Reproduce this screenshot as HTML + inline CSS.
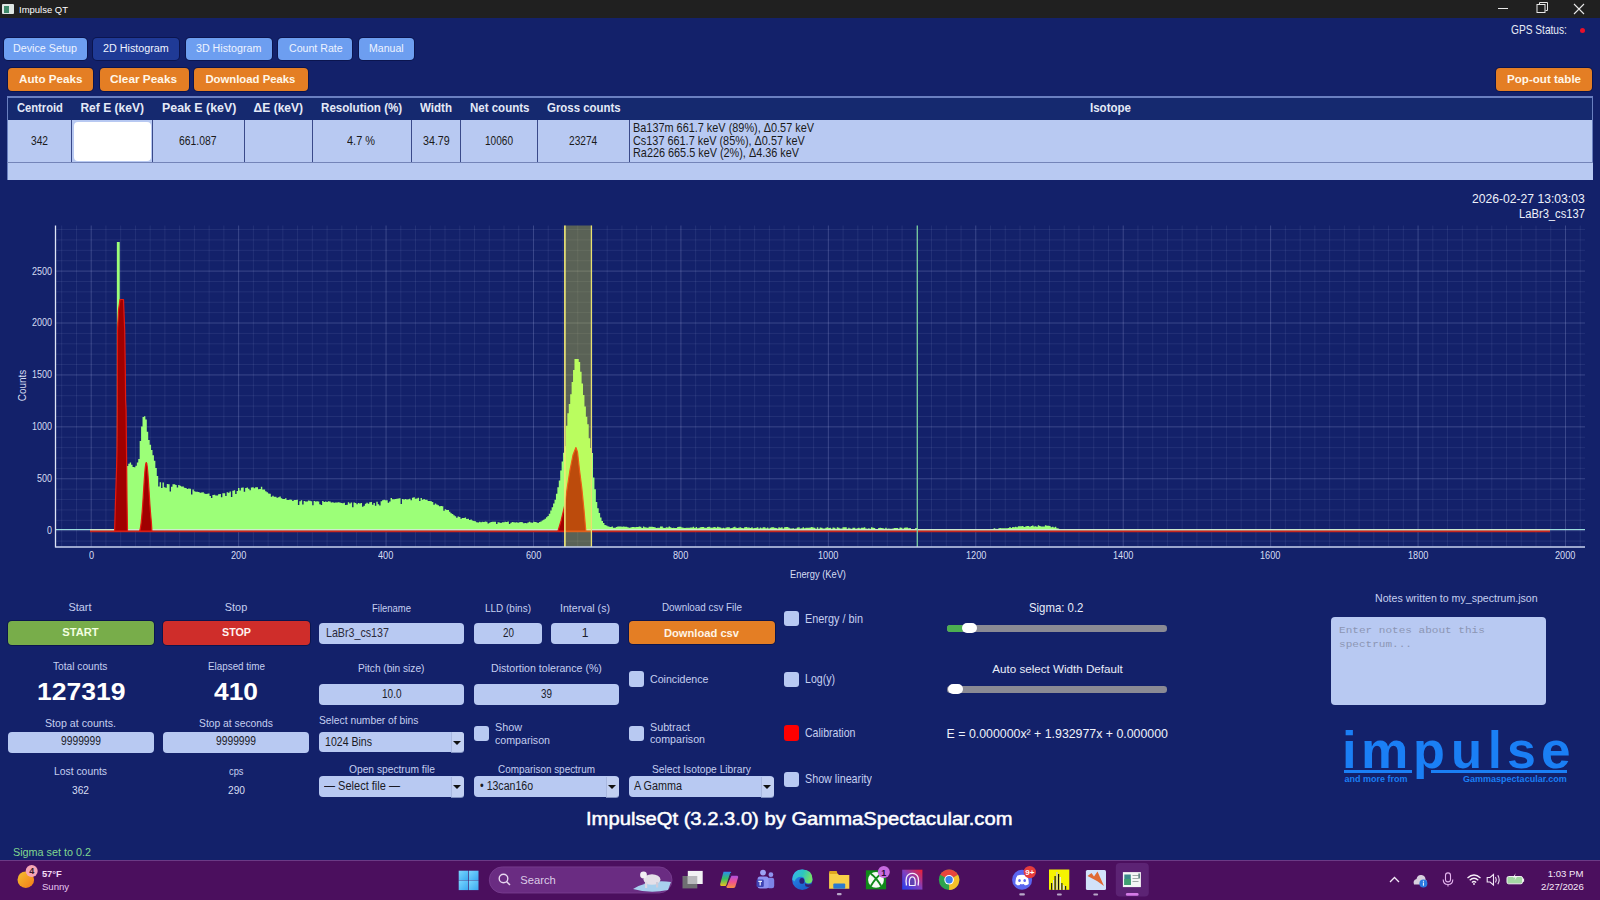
<!DOCTYPE html>
<html><head><meta charset="utf-8"><style>
html,body{margin:0;padding:0;width:1600px;height:900px;overflow:hidden;background:#13216a;}
.t{position:absolute;white-space:pre;}
.r{position:absolute;}
</style></head><body>
<div class="r" style="left:0.00px;top:0.00px;width:1600.00px;height:18.00px;background:#202020;border-radius:0px;"></div><div class="r" style="left:2.00px;top:4.00px;width:12.00px;height:10.00px;background:#dfe7e4;border-radius:1px;"></div><div class="r" style="left:4.00px;top:6.00px;width:5.00px;height:7.00px;background:#3f8a6a;border-radius:0px;"></div><div class="t" style="left:19.00px;top:4.93px;font-size:9.88px;line-height:9.88px;color:#ffffff;transform:scaleX(0.9593);transform-origin:0 0;font-family:'Liberation Sans', sans-serif;">Impulse QT</div><svg class="r" style="left:1490px;top:0px" width="110" height="18"><line x1="1498" y1="8.5" x2="1508" y2="8.5" transform="translate(-1490,0)" stroke="#e8e8e8" stroke-width="1"/><rect x="47" y="4.5" width="8" height="8" fill="none" stroke="#e8e8e8" stroke-width="1"/><path d="M49.5 4.5 V2.5 H57.5 V10.5 H55.5" fill="none" stroke="#e8e8e8" stroke-width="1"/><path d="M84 4 L94 14 M94 4 L84 14" stroke="#e8e8e8" stroke-width="1.1"/></svg><div class="r" style="left:0.00px;top:18.00px;width:1600.00px;height:842.00px;background:#13216a;border-radius:0px;"></div><div class="t" style="left:1511.00px;top:23.69px;font-size:12.06px;line-height:12.06px;color:#e6eaf5;transform:scaleX(0.8436);transform-origin:0 0;font-family:'Liberation Sans', sans-serif;">GPS Status:</div><div class="r" style="left:1579.5px;top:28.2px;width:5px;height:5px;border-radius:50%;background:#e8102a"></div><div class="r" style="left:4.00px;top:37.60px;width:83.00px;height:22.20px;background:#6d9ef0;border-radius:4px;box-shadow:0 0 0 1px rgba(6,12,56,0.55);"></div><div class="t" style="left:13.30px;top:42.45px;font-size:11.63px;line-height:11.63px;color:#eef3ff;transform:scaleX(0.9240);transform-origin:0 0;font-family:'Liberation Sans', sans-serif;">Device Setup</div><div class="r" style="left:93.00px;top:37.60px;width:86.00px;height:22.20px;background:#1f3a96;border-radius:4px;box-shadow:0 0 0 1px rgba(6,12,56,0.55);"></div><div class="t" style="left:103.40px;top:42.45px;font-size:11.63px;line-height:11.63px;color:#eef3ff;transform:scaleX(0.9258);transform-origin:0 0;font-family:'Liberation Sans', sans-serif;">2D Histogram</div><div class="r" style="left:186.00px;top:37.60px;width:86.00px;height:22.20px;background:#6d9ef0;border-radius:4px;box-shadow:0 0 0 1px rgba(6,12,56,0.55);"></div><div class="t" style="left:196.40px;top:42.45px;font-size:11.63px;line-height:11.63px;color:#eef3ff;transform:scaleX(0.9187);transform-origin:0 0;font-family:'Liberation Sans', sans-serif;">3D Histogram</div><div class="r" style="left:278.00px;top:37.60px;width:74.40px;height:22.20px;background:#6d9ef0;border-radius:4px;box-shadow:0 0 0 1px rgba(6,12,56,0.55);"></div><div class="t" style="left:288.70px;top:42.45px;font-size:11.63px;line-height:11.63px;color:#eef3ff;transform:scaleX(0.9130);transform-origin:0 0;font-family:'Liberation Sans', sans-serif;">Count Rate</div><div class="r" style="left:359.00px;top:37.60px;width:54.60px;height:22.20px;background:#6d9ef0;border-radius:4px;box-shadow:0 0 0 1px rgba(6,12,56,0.55);"></div><div class="t" style="left:369.40px;top:42.45px;font-size:11.63px;line-height:11.63px;color:#eef3ff;transform:scaleX(0.9073);transform-origin:0 0;font-family:'Liberation Sans', sans-serif;">Manual</div><div class="r" style="left:8.00px;top:67.80px;width:85.30px;height:23.40px;background:#e47e24;border-radius:4px;box-shadow:0 0 0 1px rgba(6,12,56,0.55);"></div><div class="t" style="left:18.70px;top:73.50px;font-size:11.34px;line-height:11.34px;color:#fff6e8;font-weight:bold;transform:scaleX(1.0285);transform-origin:0 0;font-family:'Liberation Sans', sans-serif;">Auto Peaks</div><div class="r" style="left:99.50px;top:67.80px;width:89.30px;height:23.40px;background:#e47e24;border-radius:4px;box-shadow:0 0 0 1px rgba(6,12,56,0.55);"></div><div class="t" style="left:110.20px;top:73.50px;font-size:11.34px;line-height:11.34px;color:#fff6e8;font-weight:bold;transform:scaleX(1.0437);transform-origin:0 0;font-family:'Liberation Sans', sans-serif;">Clear Peaks</div><div class="r" style="left:194.30px;top:67.80px;width:113.50px;height:23.40px;background:#e47e24;border-radius:4px;box-shadow:0 0 0 1px rgba(6,12,56,0.55);"></div><div class="t" style="left:205.40px;top:73.50px;font-size:11.34px;line-height:11.34px;color:#fff6e8;font-weight:bold;font-family:'Liberation Sans', sans-serif;">Download Peaks</div><div class="r" style="left:1496.00px;top:67.80px;width:96.00px;height:23.40px;background:#e47e24;border-radius:4px;box-shadow:0 0 0 1px rgba(6,12,56,0.55);"></div><div class="t" style="left:1506.70px;top:73.50px;font-size:11.34px;line-height:11.34px;color:#fff6e8;font-weight:bold;transform:scaleX(1.0232);transform-origin:0 0;font-family:'Liberation Sans', sans-serif;">Pop-out table</div><div class="r" style="left:7.00px;top:96.00px;width:1585.50px;height:84.00px;background:#b8c9f2;border-radius:0px;"></div><div class="r" style="left:7.00px;top:96.00px;width:1585.50px;height:24.00px;background:#15296f;border-radius:0px;"></div><div class="r" style="left:7.00px;top:96.00px;width:1585.50px;height:1.50px;background:#6a7fc0;border-radius:0px;"></div><div class="r" style="left:7.00px;top:96.00px;width:1.20px;height:84.00px;background:#6a7fc0;border-radius:0px;"></div><div class="r" style="left:1591.50px;top:96.00px;width:1.00px;height:66.00px;background:#6a7fc0;border-radius:0px;"></div><div class="r" style="left:7.00px;top:162.00px;width:1585.50px;height:1.20px;background:#7484b8;border-radius:0px;"></div><div class="r" style="left:70.60px;top:120.00px;width:1.20px;height:42.00px;background:#3a4a8a;border-radius:0px;"></div><div class="r" style="left:151.80px;top:120.00px;width:1.20px;height:42.00px;background:#3a4a8a;border-radius:0px;"></div><div class="r" style="left:243.80px;top:120.00px;width:1.20px;height:42.00px;background:#3a4a8a;border-radius:0px;"></div><div class="r" style="left:311.80px;top:120.00px;width:1.20px;height:42.00px;background:#3a4a8a;border-radius:0px;"></div><div class="r" style="left:410.60px;top:120.00px;width:1.20px;height:42.00px;background:#3a4a8a;border-radius:0px;"></div><div class="r" style="left:459.90px;top:120.00px;width:1.20px;height:42.00px;background:#3a4a8a;border-radius:0px;"></div><div class="r" style="left:536.90px;top:120.00px;width:1.20px;height:42.00px;background:#3a4a8a;border-radius:0px;"></div><div class="r" style="left:628.90px;top:120.00px;width:1.20px;height:42.00px;background:#3a4a8a;border-radius:0px;"></div><div class="r" style="left:73.60px;top:121.60px;width:77.40px;height:39.40px;background:#ffffff;border-radius:4px;"></div><div class="t" style="left:17.00px;top:102.39px;font-size:12.06px;line-height:12.06px;color:#e4e9f7;font-weight:bold;transform:scaleX(0.9276);transform-origin:0 0;font-family:'Liberation Sans', sans-serif;">Centroid</div><div class="t" style="left:80.40px;top:102.39px;font-size:12.06px;line-height:12.06px;color:#e4e9f7;font-weight:bold;font-family:'Liberation Sans', sans-serif;">Ref E (keV)</div><div class="t" style="left:162.00px;top:102.39px;font-size:12.06px;line-height:12.06px;color:#e4e9f7;font-weight:bold;transform:scaleX(1.0273);transform-origin:0 0;font-family:'Liberation Sans', sans-serif;">Peak E (keV)</div><div class="t" style="left:253.60px;top:102.39px;font-size:12.06px;line-height:12.06px;color:#e4e9f7;font-weight:bold;font-family:'Liberation Sans', sans-serif;">ΔE (keV)</div><div class="t" style="left:321.20px;top:102.39px;font-size:12.06px;line-height:12.06px;color:#e4e9f7;font-weight:bold;transform:scaleX(0.9628);transform-origin:0 0;font-family:'Liberation Sans', sans-serif;">Resolution (%)</div><div class="t" style="left:420.00px;top:102.39px;font-size:12.06px;line-height:12.06px;color:#e4e9f7;font-weight:bold;transform:scaleX(0.9585);transform-origin:0 0;font-family:'Liberation Sans', sans-serif;">Width</div><div class="t" style="left:469.50px;top:102.39px;font-size:12.06px;line-height:12.06px;color:#e4e9f7;font-weight:bold;transform:scaleX(0.9546);transform-origin:0 0;font-family:'Liberation Sans', sans-serif;">Net counts</div><div class="t" style="left:547.00px;top:102.39px;font-size:12.06px;line-height:12.06px;color:#e4e9f7;font-weight:bold;transform:scaleX(0.9484);transform-origin:0 0;font-family:'Liberation Sans', sans-serif;">Gross counts</div><div class="t" style="left:1090.00px;top:102.39px;font-size:12.06px;line-height:12.06px;color:#e4e9f7;font-weight:bold;transform:scaleX(0.9559);transform-origin:0 0;font-family:'Liberation Sans', sans-serif;">Isotope</div><div class="t" style="left:31.00px;top:134.54px;font-size:12.35px;line-height:12.35px;color:#1a1a1a;transform:scaleX(0.8248);transform-origin:0 0;font-family:'Liberation Sans', sans-serif;">342</div><div class="t" style="left:179.40px;top:134.54px;font-size:12.35px;line-height:12.35px;color:#1a1a1a;transform:scaleX(0.8420);transform-origin:0 0;font-family:'Liberation Sans', sans-serif;">661.087</div><div class="t" style="left:347.00px;top:134.54px;font-size:12.35px;line-height:12.35px;color:#1a1a1a;transform:scaleX(0.8864);transform-origin:0 0;font-family:'Liberation Sans', sans-serif;">4.7 %</div><div class="t" style="left:422.50px;top:134.54px;font-size:12.35px;line-height:12.35px;color:#1a1a1a;transform:scaleX(0.8653);transform-origin:0 0;font-family:'Liberation Sans', sans-serif;">34.79</div><div class="t" style="left:485.00px;top:134.54px;font-size:12.35px;line-height:12.35px;color:#1a1a1a;transform:scaleX(0.8151);transform-origin:0 0;font-family:'Liberation Sans', sans-serif;">10060</div><div class="t" style="left:569.25px;top:134.54px;font-size:12.35px;line-height:12.35px;color:#1a1a1a;transform:scaleX(0.8224);transform-origin:0 0;font-family:'Liberation Sans', sans-serif;">23274</div><div class="t" style="left:632.50px;top:122.29px;font-size:12.06px;line-height:12.06px;color:#1a1a1a;transform:scaleX(0.9039);transform-origin:0 0;font-family:'Liberation Sans', sans-serif;">Ba137m 661.7 keV (89%), Δ0.57 keV</div><div class="t" style="left:632.50px;top:134.79px;font-size:12.06px;line-height:12.06px;color:#1a1a1a;transform:scaleX(0.9031);transform-origin:0 0;font-family:'Liberation Sans', sans-serif;">Cs137 661.7 keV (85%), Δ0.57 keV</div><div class="t" style="left:632.50px;top:146.79px;font-size:12.06px;line-height:12.06px;color:#1a1a1a;transform:scaleX(0.9014);transform-origin:0 0;font-family:'Liberation Sans', sans-serif;">Ra226 665.5 keV (2%), Δ4.36 keV</div><div class="t" style="left:1472.00px;top:193.17px;font-size:12.79px;line-height:12.79px;color:#eef1fa;transform:scaleX(0.9498);transform-origin:0 0;font-family:'Liberation Sans', sans-serif;">2026-02-27 13:03:03</div><div class="t" style="left:1518.80px;top:207.76px;font-size:12.21px;line-height:12.21px;color:#eef1fa;transform:scaleX(0.9173);transform-origin:0 0;font-family:'Liberation Sans', sans-serif;">LaBr3_cs137</div><svg class="r" style="left:0;top:0" width="1600" height="600" viewBox="0 0 1600 600"><line x1="61.71" y1="225.5" x2="61.71" y2="547" stroke="rgba(200,210,255,0.09)" stroke-width="1"/><line x1="76.46" y1="225.5" x2="76.46" y2="547" stroke="rgba(200,210,255,0.09)" stroke-width="1"/><line x1="91.20" y1="225.5" x2="91.20" y2="547" stroke="rgba(200,210,255,0.22)" stroke-width="1"/><line x1="105.94" y1="225.5" x2="105.94" y2="547" stroke="rgba(200,210,255,0.09)" stroke-width="1"/><line x1="120.69" y1="225.5" x2="120.69" y2="547" stroke="rgba(200,210,255,0.09)" stroke-width="1"/><line x1="135.43" y1="225.5" x2="135.43" y2="547" stroke="rgba(200,210,255,0.09)" stroke-width="1"/><line x1="150.17" y1="225.5" x2="150.17" y2="547" stroke="rgba(200,210,255,0.09)" stroke-width="1"/><line x1="164.92" y1="225.5" x2="164.92" y2="547" stroke="rgba(200,210,255,0.09)" stroke-width="1"/><line x1="179.66" y1="225.5" x2="179.66" y2="547" stroke="rgba(200,210,255,0.09)" stroke-width="1"/><line x1="194.40" y1="225.5" x2="194.40" y2="547" stroke="rgba(200,210,255,0.09)" stroke-width="1"/><line x1="209.14" y1="225.5" x2="209.14" y2="547" stroke="rgba(200,210,255,0.09)" stroke-width="1"/><line x1="223.89" y1="225.5" x2="223.89" y2="547" stroke="rgba(200,210,255,0.09)" stroke-width="1"/><line x1="238.63" y1="225.5" x2="238.63" y2="547" stroke="rgba(200,210,255,0.22)" stroke-width="1"/><line x1="253.37" y1="225.5" x2="253.37" y2="547" stroke="rgba(200,210,255,0.09)" stroke-width="1"/><line x1="268.12" y1="225.5" x2="268.12" y2="547" stroke="rgba(200,210,255,0.09)" stroke-width="1"/><line x1="282.86" y1="225.5" x2="282.86" y2="547" stroke="rgba(200,210,255,0.09)" stroke-width="1"/><line x1="297.60" y1="225.5" x2="297.60" y2="547" stroke="rgba(200,210,255,0.09)" stroke-width="1"/><line x1="312.34" y1="225.5" x2="312.34" y2="547" stroke="rgba(200,210,255,0.09)" stroke-width="1"/><line x1="327.09" y1="225.5" x2="327.09" y2="547" stroke="rgba(200,210,255,0.09)" stroke-width="1"/><line x1="341.83" y1="225.5" x2="341.83" y2="547" stroke="rgba(200,210,255,0.09)" stroke-width="1"/><line x1="356.57" y1="225.5" x2="356.57" y2="547" stroke="rgba(200,210,255,0.09)" stroke-width="1"/><line x1="371.32" y1="225.5" x2="371.32" y2="547" stroke="rgba(200,210,255,0.09)" stroke-width="1"/><line x1="386.06" y1="225.5" x2="386.06" y2="547" stroke="rgba(200,210,255,0.22)" stroke-width="1"/><line x1="400.80" y1="225.5" x2="400.80" y2="547" stroke="rgba(200,210,255,0.09)" stroke-width="1"/><line x1="415.55" y1="225.5" x2="415.55" y2="547" stroke="rgba(200,210,255,0.09)" stroke-width="1"/><line x1="430.29" y1="225.5" x2="430.29" y2="547" stroke="rgba(200,210,255,0.09)" stroke-width="1"/><line x1="445.03" y1="225.5" x2="445.03" y2="547" stroke="rgba(200,210,255,0.09)" stroke-width="1"/><line x1="459.77" y1="225.5" x2="459.77" y2="547" stroke="rgba(200,210,255,0.09)" stroke-width="1"/><line x1="474.52" y1="225.5" x2="474.52" y2="547" stroke="rgba(200,210,255,0.09)" stroke-width="1"/><line x1="489.26" y1="225.5" x2="489.26" y2="547" stroke="rgba(200,210,255,0.09)" stroke-width="1"/><line x1="504.00" y1="225.5" x2="504.00" y2="547" stroke="rgba(200,210,255,0.09)" stroke-width="1"/><line x1="518.75" y1="225.5" x2="518.75" y2="547" stroke="rgba(200,210,255,0.09)" stroke-width="1"/><line x1="533.49" y1="225.5" x2="533.49" y2="547" stroke="rgba(200,210,255,0.22)" stroke-width="1"/><line x1="548.23" y1="225.5" x2="548.23" y2="547" stroke="rgba(200,210,255,0.09)" stroke-width="1"/><line x1="562.98" y1="225.5" x2="562.98" y2="547" stroke="rgba(200,210,255,0.09)" stroke-width="1"/><line x1="577.72" y1="225.5" x2="577.72" y2="547" stroke="rgba(200,210,255,0.09)" stroke-width="1"/><line x1="592.46" y1="225.5" x2="592.46" y2="547" stroke="rgba(200,210,255,0.09)" stroke-width="1"/><line x1="607.21" y1="225.5" x2="607.21" y2="547" stroke="rgba(200,210,255,0.09)" stroke-width="1"/><line x1="621.95" y1="225.5" x2="621.95" y2="547" stroke="rgba(200,210,255,0.09)" stroke-width="1"/><line x1="636.69" y1="225.5" x2="636.69" y2="547" stroke="rgba(200,210,255,0.09)" stroke-width="1"/><line x1="651.43" y1="225.5" x2="651.43" y2="547" stroke="rgba(200,210,255,0.09)" stroke-width="1"/><line x1="666.18" y1="225.5" x2="666.18" y2="547" stroke="rgba(200,210,255,0.09)" stroke-width="1"/><line x1="680.92" y1="225.5" x2="680.92" y2="547" stroke="rgba(200,210,255,0.22)" stroke-width="1"/><line x1="695.66" y1="225.5" x2="695.66" y2="547" stroke="rgba(200,210,255,0.09)" stroke-width="1"/><line x1="710.41" y1="225.5" x2="710.41" y2="547" stroke="rgba(200,210,255,0.09)" stroke-width="1"/><line x1="725.15" y1="225.5" x2="725.15" y2="547" stroke="rgba(200,210,255,0.09)" stroke-width="1"/><line x1="739.89" y1="225.5" x2="739.89" y2="547" stroke="rgba(200,210,255,0.09)" stroke-width="1"/><line x1="754.63" y1="225.5" x2="754.63" y2="547" stroke="rgba(200,210,255,0.09)" stroke-width="1"/><line x1="769.38" y1="225.5" x2="769.38" y2="547" stroke="rgba(200,210,255,0.09)" stroke-width="1"/><line x1="784.12" y1="225.5" x2="784.12" y2="547" stroke="rgba(200,210,255,0.09)" stroke-width="1"/><line x1="798.86" y1="225.5" x2="798.86" y2="547" stroke="rgba(200,210,255,0.09)" stroke-width="1"/><line x1="813.61" y1="225.5" x2="813.61" y2="547" stroke="rgba(200,210,255,0.09)" stroke-width="1"/><line x1="828.35" y1="225.5" x2="828.35" y2="547" stroke="rgba(200,210,255,0.22)" stroke-width="1"/><line x1="843.09" y1="225.5" x2="843.09" y2="547" stroke="rgba(200,210,255,0.09)" stroke-width="1"/><line x1="857.84" y1="225.5" x2="857.84" y2="547" stroke="rgba(200,210,255,0.09)" stroke-width="1"/><line x1="872.58" y1="225.5" x2="872.58" y2="547" stroke="rgba(200,210,255,0.09)" stroke-width="1"/><line x1="887.32" y1="225.5" x2="887.32" y2="547" stroke="rgba(200,210,255,0.09)" stroke-width="1"/><line x1="902.07" y1="225.5" x2="902.07" y2="547" stroke="rgba(200,210,255,0.09)" stroke-width="1"/><line x1="916.81" y1="225.5" x2="916.81" y2="547" stroke="rgba(200,210,255,0.09)" stroke-width="1"/><line x1="931.55" y1="225.5" x2="931.55" y2="547" stroke="rgba(200,210,255,0.09)" stroke-width="1"/><line x1="946.29" y1="225.5" x2="946.29" y2="547" stroke="rgba(200,210,255,0.09)" stroke-width="1"/><line x1="961.04" y1="225.5" x2="961.04" y2="547" stroke="rgba(200,210,255,0.09)" stroke-width="1"/><line x1="975.78" y1="225.5" x2="975.78" y2="547" stroke="rgba(200,210,255,0.22)" stroke-width="1"/><line x1="990.52" y1="225.5" x2="990.52" y2="547" stroke="rgba(200,210,255,0.09)" stroke-width="1"/><line x1="1005.27" y1="225.5" x2="1005.27" y2="547" stroke="rgba(200,210,255,0.09)" stroke-width="1"/><line x1="1020.01" y1="225.5" x2="1020.01" y2="547" stroke="rgba(200,210,255,0.09)" stroke-width="1"/><line x1="1034.75" y1="225.5" x2="1034.75" y2="547" stroke="rgba(200,210,255,0.09)" stroke-width="1"/><line x1="1049.49" y1="225.5" x2="1049.49" y2="547" stroke="rgba(200,210,255,0.09)" stroke-width="1"/><line x1="1064.24" y1="225.5" x2="1064.24" y2="547" stroke="rgba(200,210,255,0.09)" stroke-width="1"/><line x1="1078.98" y1="225.5" x2="1078.98" y2="547" stroke="rgba(200,210,255,0.09)" stroke-width="1"/><line x1="1093.72" y1="225.5" x2="1093.72" y2="547" stroke="rgba(200,210,255,0.09)" stroke-width="1"/><line x1="1108.47" y1="225.5" x2="1108.47" y2="547" stroke="rgba(200,210,255,0.09)" stroke-width="1"/><line x1="1123.21" y1="225.5" x2="1123.21" y2="547" stroke="rgba(200,210,255,0.22)" stroke-width="1"/><line x1="1137.95" y1="225.5" x2="1137.95" y2="547" stroke="rgba(200,210,255,0.09)" stroke-width="1"/><line x1="1152.70" y1="225.5" x2="1152.70" y2="547" stroke="rgba(200,210,255,0.09)" stroke-width="1"/><line x1="1167.44" y1="225.5" x2="1167.44" y2="547" stroke="rgba(200,210,255,0.09)" stroke-width="1"/><line x1="1182.18" y1="225.5" x2="1182.18" y2="547" stroke="rgba(200,210,255,0.09)" stroke-width="1"/><line x1="1196.92" y1="225.5" x2="1196.92" y2="547" stroke="rgba(200,210,255,0.09)" stroke-width="1"/><line x1="1211.67" y1="225.5" x2="1211.67" y2="547" stroke="rgba(200,210,255,0.09)" stroke-width="1"/><line x1="1226.41" y1="225.5" x2="1226.41" y2="547" stroke="rgba(200,210,255,0.09)" stroke-width="1"/><line x1="1241.15" y1="225.5" x2="1241.15" y2="547" stroke="rgba(200,210,255,0.09)" stroke-width="1"/><line x1="1255.90" y1="225.5" x2="1255.90" y2="547" stroke="rgba(200,210,255,0.09)" stroke-width="1"/><line x1="1270.64" y1="225.5" x2="1270.64" y2="547" stroke="rgba(200,210,255,0.22)" stroke-width="1"/><line x1="1285.38" y1="225.5" x2="1285.38" y2="547" stroke="rgba(200,210,255,0.09)" stroke-width="1"/><line x1="1300.13" y1="225.5" x2="1300.13" y2="547" stroke="rgba(200,210,255,0.09)" stroke-width="1"/><line x1="1314.87" y1="225.5" x2="1314.87" y2="547" stroke="rgba(200,210,255,0.09)" stroke-width="1"/><line x1="1329.61" y1="225.5" x2="1329.61" y2="547" stroke="rgba(200,210,255,0.09)" stroke-width="1"/><line x1="1344.36" y1="225.5" x2="1344.36" y2="547" stroke="rgba(200,210,255,0.09)" stroke-width="1"/><line x1="1359.10" y1="225.5" x2="1359.10" y2="547" stroke="rgba(200,210,255,0.09)" stroke-width="1"/><line x1="1373.84" y1="225.5" x2="1373.84" y2="547" stroke="rgba(200,210,255,0.09)" stroke-width="1"/><line x1="1388.58" y1="225.5" x2="1388.58" y2="547" stroke="rgba(200,210,255,0.09)" stroke-width="1"/><line x1="1403.33" y1="225.5" x2="1403.33" y2="547" stroke="rgba(200,210,255,0.09)" stroke-width="1"/><line x1="1418.07" y1="225.5" x2="1418.07" y2="547" stroke="rgba(200,210,255,0.22)" stroke-width="1"/><line x1="1432.81" y1="225.5" x2="1432.81" y2="547" stroke="rgba(200,210,255,0.09)" stroke-width="1"/><line x1="1447.56" y1="225.5" x2="1447.56" y2="547" stroke="rgba(200,210,255,0.09)" stroke-width="1"/><line x1="1462.30" y1="225.5" x2="1462.30" y2="547" stroke="rgba(200,210,255,0.09)" stroke-width="1"/><line x1="1477.04" y1="225.5" x2="1477.04" y2="547" stroke="rgba(200,210,255,0.09)" stroke-width="1"/><line x1="1491.79" y1="225.5" x2="1491.79" y2="547" stroke="rgba(200,210,255,0.09)" stroke-width="1"/><line x1="1506.53" y1="225.5" x2="1506.53" y2="547" stroke="rgba(200,210,255,0.09)" stroke-width="1"/><line x1="1521.27" y1="225.5" x2="1521.27" y2="547" stroke="rgba(200,210,255,0.09)" stroke-width="1"/><line x1="1536.01" y1="225.5" x2="1536.01" y2="547" stroke="rgba(200,210,255,0.09)" stroke-width="1"/><line x1="1550.76" y1="225.5" x2="1550.76" y2="547" stroke="rgba(200,210,255,0.09)" stroke-width="1"/><line x1="1565.50" y1="225.5" x2="1565.50" y2="547" stroke="rgba(200,210,255,0.22)" stroke-width="1"/><line x1="1580.24" y1="225.5" x2="1580.24" y2="547" stroke="rgba(200,210,255,0.09)" stroke-width="1"/><line x1="55.5" y1="541.08" x2="1585" y2="541.08" stroke="rgba(200,210,255,0.09)" stroke-width="1"/><line x1="55.5" y1="530.70" x2="1585" y2="530.70" stroke="rgba(200,210,255,0.22)" stroke-width="1"/><line x1="55.5" y1="520.32" x2="1585" y2="520.32" stroke="rgba(200,210,255,0.09)" stroke-width="1"/><line x1="55.5" y1="509.93" x2="1585" y2="509.93" stroke="rgba(200,210,255,0.09)" stroke-width="1"/><line x1="55.5" y1="499.55" x2="1585" y2="499.55" stroke="rgba(200,210,255,0.09)" stroke-width="1"/><line x1="55.5" y1="489.16" x2="1585" y2="489.16" stroke="rgba(200,210,255,0.09)" stroke-width="1"/><line x1="55.5" y1="478.78" x2="1585" y2="478.78" stroke="rgba(200,210,255,0.22)" stroke-width="1"/><line x1="55.5" y1="468.40" x2="1585" y2="468.40" stroke="rgba(200,210,255,0.09)" stroke-width="1"/><line x1="55.5" y1="458.01" x2="1585" y2="458.01" stroke="rgba(200,210,255,0.09)" stroke-width="1"/><line x1="55.5" y1="447.63" x2="1585" y2="447.63" stroke="rgba(200,210,255,0.09)" stroke-width="1"/><line x1="55.5" y1="437.24" x2="1585" y2="437.24" stroke="rgba(200,210,255,0.09)" stroke-width="1"/><line x1="55.5" y1="426.86" x2="1585" y2="426.86" stroke="rgba(200,210,255,0.22)" stroke-width="1"/><line x1="55.5" y1="416.48" x2="1585" y2="416.48" stroke="rgba(200,210,255,0.09)" stroke-width="1"/><line x1="55.5" y1="406.09" x2="1585" y2="406.09" stroke="rgba(200,210,255,0.09)" stroke-width="1"/><line x1="55.5" y1="395.71" x2="1585" y2="395.71" stroke="rgba(200,210,255,0.09)" stroke-width="1"/><line x1="55.5" y1="385.32" x2="1585" y2="385.32" stroke="rgba(200,210,255,0.09)" stroke-width="1"/><line x1="55.5" y1="374.94" x2="1585" y2="374.94" stroke="rgba(200,210,255,0.22)" stroke-width="1"/><line x1="55.5" y1="364.56" x2="1585" y2="364.56" stroke="rgba(200,210,255,0.09)" stroke-width="1"/><line x1="55.5" y1="354.17" x2="1585" y2="354.17" stroke="rgba(200,210,255,0.09)" stroke-width="1"/><line x1="55.5" y1="343.79" x2="1585" y2="343.79" stroke="rgba(200,210,255,0.09)" stroke-width="1"/><line x1="55.5" y1="333.40" x2="1585" y2="333.40" stroke="rgba(200,210,255,0.09)" stroke-width="1"/><line x1="55.5" y1="323.02" x2="1585" y2="323.02" stroke="rgba(200,210,255,0.22)" stroke-width="1"/><line x1="55.5" y1="312.64" x2="1585" y2="312.64" stroke="rgba(200,210,255,0.09)" stroke-width="1"/><line x1="55.5" y1="302.25" x2="1585" y2="302.25" stroke="rgba(200,210,255,0.09)" stroke-width="1"/><line x1="55.5" y1="291.87" x2="1585" y2="291.87" stroke="rgba(200,210,255,0.09)" stroke-width="1"/><line x1="55.5" y1="281.48" x2="1585" y2="281.48" stroke="rgba(200,210,255,0.09)" stroke-width="1"/><line x1="55.5" y1="271.10" x2="1585" y2="271.10" stroke="rgba(200,210,255,0.22)" stroke-width="1"/><line x1="55.5" y1="260.72" x2="1585" y2="260.72" stroke="rgba(200,210,255,0.09)" stroke-width="1"/><line x1="55.5" y1="250.33" x2="1585" y2="250.33" stroke="rgba(200,210,255,0.09)" stroke-width="1"/><line x1="55.5" y1="239.95" x2="1585" y2="239.95" stroke="rgba(200,210,255,0.09)" stroke-width="1"/><line x1="55.5" y1="229.56" x2="1585" y2="229.56" stroke="rgba(200,210,255,0.09)" stroke-width="1"/><polygon points="91.20,529.5 91.20,529.50 92.63,529.50 92.63,529.50 94.05,529.50 94.05,529.50 95.48,529.50 95.48,529.50 96.90,529.50 96.90,529.50 98.33,529.50 98.33,529.50 99.75,529.50 99.75,529.50 101.18,529.50 101.18,529.50 102.60,529.50 102.60,529.50 104.03,529.50 104.03,529.50 105.46,529.50 105.46,529.50 106.88,529.50 106.88,529.50 108.31,529.50 108.31,529.50 109.73,529.50 109.73,529.50 111.16,529.50 111.16,529.50 112.58,529.50 112.58,529.50 114.01,529.50 114.01,529.50 115.43,529.50 115.43,529.50 116.86,529.50 116.86,242.00 118.29,242.00 118.29,242.00 119.71,242.00 119.71,323.33 121.14,323.33 121.14,364.71 122.56,364.71 122.56,401.37 123.99,401.37 123.99,429.21 125.41,429.21 125.41,447.95 126.84,447.95 126.84,465.92 128.26,465.92 128.26,463.64 129.69,463.64 129.69,462.60 131.12,462.60 131.12,464.74 132.54,464.74 132.54,466.88 133.97,466.88 133.97,467.32 135.39,467.32 135.39,465.75 136.82,465.75 136.82,462.43 138.24,462.43 138.24,459.10 139.67,459.10 139.67,441.03 141.09,441.03 141.09,426.54 142.52,426.54 142.52,416.88 143.95,416.88 143.95,416.17 145.37,416.17 145.37,419.61 146.80,419.61 146.80,431.77 148.22,431.77 148.22,440.12 149.65,440.12 149.65,444.87 151.07,444.87 151.07,449.95 152.50,449.95 152.50,455.30 153.93,455.30 153.93,460.64 155.35,460.64 155.35,468.03 156.78,468.03 156.78,476.10 158.20,476.10 158.20,486.47 159.63,486.47 159.63,482.35 161.05,482.35 161.05,487.89 162.48,487.89 162.48,482.62 163.90,482.62 163.90,487.28 165.33,487.28 165.33,487.63 166.76,487.63 166.76,484.06 168.18,484.06 168.18,484.14 169.61,484.14 169.61,491.49 171.03,491.49 171.03,486.85 172.46,486.85 172.46,484.20 173.88,484.20 173.88,484.16 175.31,484.16 175.31,485.05 176.73,485.05 176.73,487.59 178.16,487.59 178.16,485.00 179.59,485.00 179.59,485.84 181.01,485.84 181.01,486.59 182.44,486.59 182.44,486.62 183.86,486.62 183.86,487.74 185.29,487.74 185.29,488.03 186.71,488.03 186.71,489.00 188.14,489.00 188.14,488.55 189.56,488.55 189.56,488.77 190.99,488.77 190.99,494.39 192.42,494.39 192.42,489.62 193.84,489.62 193.84,491.27 195.27,491.27 195.27,491.83 196.69,491.83 196.69,491.87 198.12,491.87 198.12,492.01 199.54,492.01 199.54,492.75 200.97,492.75 200.97,492.50 202.39,492.50 202.39,492.16 203.82,492.16 203.82,493.43 205.25,493.43 205.25,494.04 206.67,494.04 206.67,493.67 208.10,493.67 208.10,493.41 209.52,493.41 209.52,495.95 210.95,495.95 210.95,497.94 212.37,497.94 212.37,494.99 213.80,494.99 213.80,494.82 215.22,494.82 215.22,495.45 216.65,495.45 216.65,495.52 218.08,495.52 218.08,494.31 219.50,494.31 219.50,494.08 220.93,494.08 220.93,497.15 222.35,497.15 222.35,493.17 223.78,493.17 223.78,493.22 225.20,493.22 225.20,496.03 226.63,496.03 226.63,492.33 228.05,492.33 228.05,492.75 229.48,492.75 229.48,491.51 230.91,491.51 230.91,496.98 232.33,496.98 232.33,490.87 233.76,490.87 233.76,490.36 235.18,490.36 235.18,494.00 236.61,494.00 236.61,491.09 238.03,491.09 238.03,488.12 239.46,488.12 239.46,490.57 240.88,490.57 240.88,487.82 242.31,487.82 242.31,487.60 243.74,487.60 243.74,491.64 245.16,491.64 245.16,487.91 246.59,487.91 246.59,487.45 248.01,487.45 248.01,488.74 249.44,488.74 249.44,490.37 250.86,490.37 250.86,487.49 252.29,487.49 252.29,487.29 253.72,487.29 253.72,488.26 255.14,488.26 255.14,487.15 256.57,487.15 256.57,487.31 257.99,487.31 257.99,489.19 259.42,489.19 259.42,489.10 260.84,489.10 260.84,486.87 262.27,486.87 262.27,489.55 263.69,489.55 263.69,489.58 265.12,489.58 265.12,491.16 266.55,491.16 266.55,492.37 267.97,492.37 267.97,493.46 269.40,493.46 269.40,493.65 270.82,493.65 270.82,496.82 272.25,496.82 272.25,495.75 273.67,495.75 273.67,496.74 275.10,496.74 275.10,496.67 276.52,496.67 276.52,497.86 277.95,497.86 277.95,497.19 279.38,497.19 279.38,496.40 280.80,496.40 280.80,498.26 282.23,498.26 282.23,498.93 283.65,498.93 283.65,498.96 285.08,498.96 285.08,498.37 286.50,498.37 286.50,500.02 287.93,500.02 287.93,500.09 289.35,500.09 289.35,499.49 290.78,499.49 290.78,499.81 292.21,499.81 292.21,500.90 293.63,500.90 293.63,500.06 295.06,500.06 295.06,499.92 296.48,499.92 296.48,499.80 297.91,499.80 297.91,505.02 299.33,505.02 299.33,501.27 300.76,501.27 300.76,500.33 302.18,500.33 302.18,504.58 303.61,504.58 303.61,500.96 305.04,500.96 305.04,501.48 306.46,501.48 306.46,501.45 307.89,501.45 307.89,500.47 309.31,500.47 309.31,500.67 310.74,500.67 310.74,501.21 312.16,501.21 312.16,505.27 313.59,505.27 313.59,500.98 315.01,500.98 315.01,501.42 316.44,501.42 316.44,501.23 317.87,501.23 317.87,501.43 319.29,501.43 319.29,504.29 320.72,504.29 320.72,504.92 322.14,504.92 322.14,501.12 323.57,501.12 323.57,502.07 324.99,502.07 324.99,501.51 326.42,501.51 326.42,501.95 327.84,501.95 327.84,501.30 329.27,501.30 329.27,501.60 330.70,501.60 330.70,502.51 332.12,502.51 332.12,502.24 333.55,502.24 333.55,502.87 334.97,502.87 334.97,502.46 336.40,502.46 336.40,502.38 337.82,502.38 337.82,502.35 339.25,502.35 339.25,502.46 340.67,502.46 340.67,502.89 342.10,502.89 342.10,503.35 343.53,503.35 343.53,502.81 344.95,502.81 344.95,505.02 346.38,505.02 346.38,504.80 347.80,504.80 347.80,502.24 349.23,502.24 349.23,503.45 350.65,503.45 350.65,502.52 352.08,502.52 352.08,507.27 353.50,507.27 353.50,502.43 354.93,502.43 354.93,503.12 356.36,503.12 356.36,504.14 357.78,504.14 357.78,502.88 359.21,502.88 359.21,503.52 360.63,503.52 360.63,503.08 362.06,503.08 362.06,506.86 363.48,506.86 363.48,505.84 364.91,505.84 364.91,503.84 366.34,503.84 366.34,502.71 367.76,502.71 367.76,503.63 369.19,503.63 369.19,502.30 370.61,502.30 370.61,501.96 372.04,501.96 372.04,504.70 373.46,504.70 373.46,502.88 374.89,502.88 374.89,505.75 376.31,505.75 376.31,501.86 377.74,501.86 377.74,504.37 379.17,504.37 379.17,505.48 380.59,505.48 380.59,501.25 382.02,501.25 382.02,500.13 383.44,500.13 383.44,499.86 384.87,499.86 384.87,500.25 386.29,500.25 386.29,500.17 387.72,500.17 387.72,502.76 389.14,502.76 389.14,501.45 390.57,501.45 390.57,498.08 392.00,498.08 392.00,499.37 393.42,499.37 393.42,499.26 394.85,499.26 394.85,498.99 396.27,498.99 396.27,498.65 397.70,498.65 397.70,498.55 399.12,498.55 399.12,498.14 400.55,498.14 400.55,504.10 401.97,504.10 401.97,498.96 403.40,498.96 403.40,499.51 404.83,499.51 404.83,498.90 406.25,498.90 406.25,499.57 407.68,499.57 407.68,499.25 409.10,499.25 409.10,498.84 410.53,498.84 410.53,500.29 411.95,500.29 411.95,497.76 413.38,497.76 413.38,497.24 414.80,497.24 414.80,498.82 416.23,498.82 416.23,498.46 417.66,498.46 417.66,497.69 419.08,497.69 419.08,501.07 420.51,501.07 420.51,498.06 421.93,498.06 421.93,499.72 423.36,499.72 423.36,499.07 424.78,499.07 424.78,499.69 426.21,499.69 426.21,499.72 427.63,499.72 427.63,500.99 429.06,500.99 429.06,501.08 430.49,501.08 430.49,501.29 431.91,501.29 431.91,502.03 433.34,502.03 433.34,504.74 434.76,504.74 434.76,503.47 436.19,503.47 436.19,504.54 437.61,504.54 437.61,505.35 439.04,505.35 439.04,506.31 440.46,506.31 440.46,506.03 441.89,506.03 441.89,506.35 443.32,506.35 443.32,510.87 444.74,510.87 444.74,509.20 446.17,509.20 446.17,509.99 447.59,509.99 447.59,510.09 449.02,510.09 449.02,511.73 450.44,511.73 450.44,513.26 451.87,513.26 451.87,513.95 453.29,513.95 453.29,515.16 454.72,515.16 454.72,516.17 456.15,516.17 456.15,517.75 457.57,517.75 457.57,516.53 459.00,516.53 459.00,517.00 460.42,517.00 460.42,518.84 461.85,518.84 461.85,517.91 463.27,517.91 463.27,517.93 464.70,517.93 464.70,517.54 466.13,517.54 466.13,519.07 467.55,519.07 467.55,518.80 468.98,518.80 468.98,520.08 470.40,520.08 470.40,519.60 471.83,519.60 471.83,520.57 473.25,520.57 473.25,520.96 474.68,520.96 474.68,521.23 476.10,521.23 476.10,522.15 477.53,522.15 477.53,522.54 478.96,522.54 478.96,521.66 480.38,521.66 480.38,522.35 481.81,522.35 481.81,521.72 483.23,521.72 483.23,522.02 484.66,522.02 484.66,521.48 486.08,521.48 486.08,521.63 487.51,521.63 487.51,523.57 488.93,523.57 488.93,522.65 490.36,522.65 490.36,522.08 491.79,522.08 491.79,521.71 493.21,521.71 493.21,521.73 494.64,521.73 494.64,521.64 496.06,521.64 496.06,523.97 497.49,523.97 497.49,522.26 498.91,522.26 498.91,522.59 500.34,522.59 500.34,522.91 501.76,522.91 501.76,522.28 503.19,522.28 503.19,522.23 504.62,522.23 504.62,521.75 506.04,521.75 506.04,522.05 507.47,522.05 507.47,521.56 508.89,521.56 508.89,524.00 510.32,524.00 510.32,522.74 511.74,522.74 511.74,522.07 513.17,522.07 513.17,522.26 514.59,522.26 514.59,522.59 516.02,522.59 516.02,522.35 517.45,522.35 517.45,522.75 518.87,522.75 518.87,522.15 520.30,522.15 520.30,522.10 521.72,522.10 521.72,522.27 523.15,522.27 523.15,523.23 524.57,523.23 524.57,523.00 526.00,523.00 526.00,523.16 527.42,523.16 527.42,522.58 528.85,522.58 528.85,521.78 530.28,521.78 530.28,522.42 531.70,522.42 531.70,522.73 533.13,522.73 533.13,521.78 534.55,521.78 534.55,521.90 535.98,521.90 535.98,522.25 537.40,522.25 537.40,522.88 538.83,522.88 538.83,522.12 540.25,522.12 540.25,521.58 541.68,521.58 541.68,520.61 543.11,520.61 543.11,519.65 544.53,519.65 544.53,518.76 545.96,518.76 545.96,517.33 547.38,517.33 547.38,515.90 548.81,515.90 548.81,513.81 550.23,513.81 550.23,510.55 551.66,510.55 551.66,507.29 553.08,507.29 553.08,503.54 554.51,503.54 554.51,499.74 555.94,499.74 555.94,493.83 557.36,493.83 557.36,487.26 558.79,487.26 558.79,480.48 560.21,480.48 560.21,470.53 561.64,470.53 561.64,461.49 563.06,461.49 563.06,452.66 564.49,452.66 564.49,446.32 565.91,446.32 565.91,425.85 567.34,425.85 567.34,413.16 568.77,413.16 568.77,404.11 570.19,404.11 570.19,394.35 571.62,394.35 571.62,381.96 573.04,381.96 573.04,370.00 574.47,370.00 574.47,359.00 575.89,359.00 575.89,359.00 577.32,359.00 577.32,359.00 578.75,359.00 578.75,362.02 580.17,362.02 580.17,371.86 581.60,371.86 581.60,383.47 583.02,383.47 583.02,394.88 584.45,394.88 584.45,406.57 585.87,406.57 585.87,416.66 587.30,416.66 587.30,424.36 588.72,424.36 588.72,438.24 590.15,438.24 590.15,448.00 591.58,448.00 591.58,452.96 593.00,452.96 593.00,477.55 594.43,477.55 594.43,489.28 595.85,489.28 595.85,501.89 597.28,501.89 597.28,508.23 598.70,508.23 598.70,512.88 600.13,512.88 600.13,517.53 601.55,517.53 601.55,520.98 602.98,520.98 602.98,523.08 604.41,523.08 604.41,525.05 605.83,525.05 605.83,525.62 607.26,525.62 607.26,526.19 608.68,526.19 608.68,526.76 610.11,526.76 610.11,527.00 611.53,527.00 611.53,526.56 612.96,526.56 612.96,527.67 614.38,527.67 614.38,527.82 615.81,527.82 615.81,526.96 617.24,526.96 617.24,526.47 618.66,526.47 618.66,526.56 620.09,526.56 620.09,526.41 621.51,526.41 621.51,526.82 622.94,526.82 622.94,526.42 624.36,526.42 624.36,526.67 625.79,526.67 625.79,526.71 627.21,526.71 627.21,527.21 628.64,527.21 628.64,527.73 630.07,527.73 630.07,527.51 631.49,527.51 631.49,526.98 632.92,526.98 632.92,526.99 634.34,526.99 634.34,527.18 635.77,527.18 635.77,526.95 637.19,526.95 637.19,526.90 638.62,526.90 638.62,526.46 640.04,526.46 640.04,526.81 641.47,526.81 641.47,527.93 642.90,527.93 642.90,526.59 644.32,526.59 644.32,527.20 645.75,527.20 645.75,527.41 647.17,527.41 647.17,527.79 648.60,527.79 648.60,526.76 650.02,526.76 650.02,526.86 651.45,526.86 651.45,526.83 652.87,526.83 652.87,527.08 654.30,527.08 654.30,527.16 655.73,527.16 655.73,527.98 657.15,527.98 657.15,527.82 658.58,527.82 658.58,527.87 660.00,527.87 660.00,526.52 661.43,526.52 661.43,526.54 662.85,526.54 662.85,527.63 664.28,527.63 664.28,527.94 665.70,527.94 665.70,527.27 667.13,527.27 667.13,527.46 668.56,527.46 668.56,526.53 669.98,526.53 669.98,527.16 671.41,527.16 671.41,528.03 672.83,528.03 672.83,527.87 674.26,527.87 674.26,527.93 675.68,527.93 675.68,528.12 677.11,528.12 677.11,526.97 678.54,526.97 678.54,526.76 679.96,526.76 679.96,526.84 681.39,526.84 681.39,527.44 682.81,527.44 682.81,527.70 684.24,527.70 684.24,528.12 685.66,528.12 685.66,527.78 687.09,527.78 687.09,527.67 688.51,527.67 688.51,527.86 689.94,527.86 689.94,527.38 691.37,527.38 691.37,527.54 692.79,527.54 692.79,526.73 694.22,526.73 694.22,527.92 695.64,527.92 695.64,527.05 697.07,527.05 697.07,528.16 698.49,528.16 698.49,527.73 699.92,527.73 699.92,527.19 701.34,527.19 701.34,526.91 702.77,526.91 702.77,527.12 704.20,527.12 704.20,527.74 705.62,527.74 705.62,527.84 707.05,527.84 707.05,526.91 708.47,526.91 708.47,526.85 709.90,526.85 709.90,527.58 711.32,527.58 711.32,527.68 712.75,527.68 712.75,527.37 714.17,527.37 714.17,527.11 715.60,527.11 715.60,527.72 717.03,527.72 717.03,526.78 718.45,526.78 718.45,527.25 719.88,527.25 719.88,527.51 721.30,527.51 721.30,528.32 722.73,528.32 722.73,527.82 724.15,527.82 724.15,528.21 725.58,528.21 725.58,527.56 727.00,527.56 727.00,527.18 728.43,527.18 728.43,527.20 729.86,527.20 729.86,528.35 731.28,528.35 731.28,527.95 732.71,527.95 732.71,527.32 734.13,527.32 734.13,526.86 735.56,526.86 735.56,527.63 736.98,527.63 736.98,527.92 738.41,527.92 738.41,527.52 739.83,527.52 739.83,527.26 741.26,527.26 741.26,527.92 742.69,527.92 742.69,528.34 744.11,528.34 744.11,527.23 745.54,527.23 745.54,526.93 746.96,526.93 746.96,527.42 748.39,527.42 748.39,527.55 749.81,527.55 749.81,527.98 751.24,527.98 751.24,527.21 752.66,527.21 752.66,528.17 754.09,528.17 754.09,528.08 755.52,528.08 755.52,527.72 756.94,527.72 756.94,527.24 758.37,527.24 758.37,528.47 759.79,528.47 759.79,527.42 761.22,527.42 761.22,528.24 762.64,528.24 762.64,527.30 764.07,527.30 764.07,527.29 765.49,527.29 765.49,528.16 766.92,528.16 766.92,527.42 768.35,527.42 768.35,528.48 769.77,528.48 769.77,527.75 771.20,527.75 771.20,527.26 772.62,527.26 772.62,527.33 774.05,527.33 774.05,527.64 775.47,527.64 775.47,528.05 776.90,528.05 776.90,528.50 778.32,528.50 778.32,527.23 779.75,527.23 779.75,527.63 781.18,527.63 781.18,527.34 782.60,527.34 782.60,528.57 784.03,528.57 784.03,527.24 785.45,527.24 785.45,527.10 786.88,527.10 786.88,527.12 788.30,527.12 788.30,527.66 789.73,527.66 789.73,528.47 791.16,528.47 791.16,528.45 792.58,528.45 792.58,528.22 794.01,528.22 794.01,528.65 795.43,528.65 795.43,528.55 796.86,528.55 796.86,527.59 798.28,527.59 798.28,527.36 799.71,527.36 799.71,528.57 801.13,528.57 801.13,528.27 802.56,528.27 802.56,527.13 803.99,527.13 803.99,528.15 805.41,528.15 805.41,527.70 806.84,527.70 806.84,527.69 808.26,527.69 808.26,527.63 809.69,527.63 809.69,527.38 811.11,527.38 811.11,527.12 812.54,527.12 812.54,527.57 813.96,527.57 813.96,527.69 815.39,527.69 815.39,528.66 816.82,528.66 816.82,527.33 818.24,527.33 818.24,528.68 819.67,528.68 819.67,527.48 821.09,527.48 821.09,527.72 822.52,527.72 822.52,528.47 823.94,528.47 823.94,528.47 825.37,528.47 825.37,527.86 826.79,527.86 826.79,527.25 828.22,527.25 828.22,527.93 829.65,527.93 829.65,527.78 831.07,527.78 831.07,528.66 832.50,528.66 832.50,527.50 833.92,527.50 833.92,527.78 835.35,527.78 835.35,528.64 836.77,528.64 836.77,527.26 838.20,527.26 838.20,527.87 839.62,527.87 839.62,528.52 841.05,528.52 841.05,528.45 842.48,528.45 842.48,527.29 843.90,527.29 843.90,527.29 845.33,527.29 845.33,527.34 846.75,527.34 846.75,528.72 848.18,528.72 848.18,527.66 849.60,527.66 849.60,528.45 851.03,528.45 851.03,528.70 852.45,528.70 852.45,527.81 853.88,527.81 853.88,527.71 855.31,527.71 855.31,528.81 856.73,528.81 856.73,528.27 858.16,528.27 858.16,527.71 859.58,527.71 859.58,528.44 861.01,528.44 861.01,527.80 862.43,527.80 862.43,527.74 863.86,527.74 863.86,527.31 865.28,527.31 865.28,528.52 866.71,528.52 866.71,528.78 868.14,528.78 868.14,528.34 869.56,528.34 869.56,528.84 870.99,528.84 870.99,527.37 872.41,527.37 872.41,527.71 873.84,527.71 873.84,528.10 875.26,528.10 875.26,528.88 876.69,528.88 876.69,528.88 878.11,528.88 878.11,527.98 879.54,527.98 879.54,527.77 880.97,527.77 880.97,528.06 882.39,528.06 882.39,528.16 883.82,528.16 883.82,528.87 885.24,528.87 885.24,527.68 886.67,527.68 886.67,528.67 888.09,528.67 888.09,528.58 889.52,528.58 889.52,528.72 890.95,528.72 890.95,528.64 892.37,528.64 892.37,528.38 893.80,528.38 893.80,527.94 895.22,527.94 895.22,527.93 896.65,527.93 896.65,528.01 898.07,528.01 898.07,528.68 899.50,528.68 899.50,527.56 900.92,527.56 900.92,527.76 902.35,527.76 902.35,528.65 903.78,528.65 903.78,527.85 905.20,527.85 905.20,527.56 906.63,527.56 906.63,527.52 908.05,527.52 908.05,528.35 909.48,528.35 909.48,528.00 910.90,528.00 910.90,529.05 912.33,529.05 912.33,528.90 913.75,528.90 913.75,529.07 915.18,529.07 915.18,527.92 916.61,527.92 916.61,528.02 918.03,528.02 918.03,529.50 919.46,529.50 919.46,529.50 920.88,529.50 920.88,529.50 922.31,529.50 922.31,529.50 923.73,529.50 923.73,529.50 925.16,529.50 925.16,529.50 926.58,529.50 926.58,529.50 928.01,529.50 928.01,529.50 929.44,529.50 929.44,529.50 930.86,529.50 930.86,529.50 932.29,529.50 932.29,529.50 933.71,529.50 933.71,529.50 935.14,529.50 935.14,529.50 936.56,529.50 936.56,529.50 937.99,529.50 937.99,529.50 939.41,529.50 939.41,529.50 940.84,529.50 940.84,529.50 942.27,529.50 942.27,529.50 943.69,529.50 943.69,529.50 945.12,529.50 945.12,529.50 946.54,529.50 946.54,529.50 947.97,529.50 947.97,529.50 949.39,529.50 949.39,529.50 950.82,529.50 950.82,529.50 952.24,529.50 952.24,529.50 953.67,529.50 953.67,529.50 955.10,529.50 955.10,529.50 956.52,529.50 956.52,529.50 957.95,529.50 957.95,529.50 959.37,529.50 959.37,529.50 960.80,529.50 960.80,529.50 962.22,529.50 962.22,529.50 963.65,529.50 963.65,529.50 965.07,529.50 965.07,529.50 966.50,529.50 966.50,529.50 967.93,529.50 967.93,529.50 969.35,529.50 969.35,529.50 970.78,529.50 970.78,529.50 972.20,529.50 972.20,529.50 973.63,529.50 973.63,529.50 975.05,529.50 975.05,529.50 976.48,529.50 976.48,529.50 977.90,529.50 977.90,529.50 979.33,529.50 979.33,529.50 980.76,529.50 980.76,529.50 982.18,529.50 982.18,529.50 983.61,529.50 983.61,529.50 985.03,529.50 985.03,529.50 986.46,529.50 986.46,529.50 987.88,529.50 987.88,529.50 989.31,529.50 989.31,529.50 990.74,529.50 990.74,529.30 992.16,529.30 992.16,529.10 993.59,529.10 993.59,528.25 995.01,528.25 995.01,528.74 996.44,528.74 996.44,528.96 997.86,528.96 997.86,528.43 999.29,528.43 999.29,527.97 1000.71,527.97 1000.71,528.15 1002.14,528.15 1002.14,528.36 1003.57,528.36 1003.57,528.34 1004.99,528.34 1004.99,528.33 1006.42,528.33 1006.42,528.34 1007.84,528.34 1007.84,527.91 1009.27,527.91 1009.27,526.90 1010.69,526.90 1010.69,527.90 1012.12,527.90 1012.12,526.89 1013.54,526.89 1013.54,527.18 1014.97,527.18 1014.97,526.75 1016.40,526.75 1016.40,527.24 1017.82,527.24 1017.82,526.28 1019.25,526.28 1019.25,526.27 1020.67,526.27 1020.67,526.17 1022.10,526.17 1022.10,525.92 1023.52,525.92 1023.52,527.00 1024.95,527.00 1024.95,526.41 1026.37,526.41 1026.37,525.92 1027.80,525.92 1027.80,525.93 1029.23,525.93 1029.23,526.79 1030.65,526.79 1030.65,526.00 1032.08,526.00 1032.08,525.55 1033.50,525.55 1033.50,526.47 1034.93,526.47 1034.93,526.21 1036.35,526.21 1036.35,526.74 1037.78,526.74 1037.78,525.31 1039.20,525.31 1039.20,525.89 1040.63,525.89 1040.63,526.43 1042.06,526.43 1042.06,526.46 1043.48,526.46 1043.48,526.57 1044.91,526.57 1044.91,525.23 1046.33,525.23 1046.33,525.77 1047.76,525.77 1047.76,525.64 1049.18,525.64 1049.18,525.89 1050.61,525.89 1050.61,527.29 1052.03,527.29 1052.03,526.81 1053.46,526.81 1053.46,527.51 1054.89,527.51 1054.89,526.76 1056.31,526.76 1056.31,528.23 1057.74,528.23 1057.74,528.45 1059.16,528.45 1059.16,529.42 1060.59,529.42 1060.59,529.50 1062.01,529.50 1062.01,529.50 1063.44,529.50 1063.44,529.50 1064.86,529.50 1064.86,529.50 1066.29,529.50 1066.29,529.50 1067.72,529.50 1067.72,529.50 1069.14,529.50 1069.14,529.50 1070.57,529.50 1070.57,529.50 1071.99,529.50 1071.99,529.50 1073.42,529.50 1073.42,529.50 1074.84,529.50 1074.84,529.50 1076.27,529.50 1076.27,529.50 1077.69,529.50 1077.69,529.50 1079.12,529.50 1079.12,529.50 1080.55,529.50 1080.55,529.50 1081.97,529.50 1081.97,529.50 1083.40,529.50 1083.40,529.50 1084.82,529.50 1084.82,529.50 1086.25,529.50 1086.25,529.50 1087.67,529.50 1087.67,529.50 1089.10,529.50 1089.10,529.50 1090.52,529.50 1090.52,529.50 1091.95,529.50 1091.95,529.50 1093.38,529.50 1093.38,529.50 1094.80,529.50 1094.80,529.50 1096.23,529.50 1096.23,529.50 1097.65,529.50 1097.65,529.50 1099.08,529.50 1099.08,529.50 1100.50,529.50 1100.50,529.50 1101.93,529.50 1101.93,529.50 1103.36,529.50 1103.36,529.50 1104.78,529.50 1104.78,529.50 1106.21,529.50 1106.21,529.50 1107.63,529.50 1107.63,529.50 1109.06,529.50 1109.06,529.50 1110.48,529.50 1110.48,529.50 1111.91,529.50 1111.91,529.50 1113.33,529.50 1113.33,529.50 1114.76,529.50 1114.76,529.50 1116.19,529.50 1116.19,529.50 1117.61,529.50 1117.61,529.50 1119.04,529.50 1119.04,529.50 1120.46,529.50 1120.46,529.50 1121.89,529.50 1121.89,529.50 1123.31,529.50 1123.31,529.50 1124.74,529.50 1124.74,529.50 1126.16,529.50 1126.16,529.50 1127.59,529.50 1127.59,529.50 1129.02,529.50 1129.02,529.50 1130.44,529.50 1130.44,529.50 1131.87,529.50 1131.87,529.50 1133.29,529.50 1133.29,529.50 1134.72,529.50 1134.72,529.50 1136.14,529.50 1136.14,529.50 1137.57,529.50 1137.57,529.50 1138.99,529.50 1138.99,529.50 1140.42,529.50 1140.42,529.50 1141.85,529.50 1141.85,529.50 1143.27,529.50 1143.27,529.50 1144.70,529.50 1144.70,529.50 1146.12,529.50 1146.12,529.50 1147.55,529.50 1147.55,529.50 1148.97,529.50 1148.97,529.50 1150.40,529.50 1150.40,529.50 1151.82,529.50 1151.82,529.50 1153.25,529.50 1153.25,529.50 1154.68,529.50 1154.68,529.50 1156.10,529.50 1156.10,529.50 1157.53,529.50 1157.53,529.50 1158.95,529.50 1158.95,529.50 1160.38,529.50 1160.38,529.50 1161.80,529.50 1161.80,529.50 1163.23,529.50 1163.23,529.50 1164.65,529.50 1164.65,529.50 1166.08,529.50 1166.08,529.50 1167.51,529.50 1167.51,529.50 1168.93,529.50 1168.93,529.50 1170.36,529.50 1170.36,529.50 1171.78,529.50 1171.78,529.50 1173.21,529.50 1173.21,529.50 1174.63,529.50 1174.63,529.50 1176.06,529.50 1176.06,529.50 1177.48,529.50 1177.48,529.50 1178.91,529.50 1178.91,529.50 1180.34,529.50 1180.34,529.50 1181.76,529.50 1181.76,529.50 1183.19,529.50 1183.19,529.50 1184.61,529.50 1184.61,529.50 1186.04,529.50 1186.04,529.50 1187.46,529.50 1187.46,529.50 1188.89,529.50 1188.89,529.50 1190.31,529.50 1190.31,529.50 1191.74,529.50 1191.74,529.50 1193.17,529.50 1193.17,529.50 1194.59,529.50 1194.59,529.50 1196.02,529.50 1196.02,529.50 1197.44,529.50 1197.44,529.50 1198.87,529.50 1198.87,529.50 1200.29,529.50 1200.29,529.50 1201.72,529.50 1201.72,529.50 1203.15,529.50 1203.15,529.50 1204.57,529.50 1204.57,529.50 1206.00,529.50 1206.00,529.50 1207.42,529.50 1207.42,529.50 1208.85,529.50 1208.85,529.50 1210.27,529.50 1210.27,529.50 1211.70,529.50 1211.70,529.50 1213.12,529.50 1213.12,529.50 1214.55,529.50 1214.55,529.50 1215.98,529.50 1215.98,529.50 1217.40,529.50 1217.40,529.50 1218.83,529.50 1218.83,529.50 1220.25,529.50 1220.25,529.50 1221.68,529.50 1221.68,529.50 1223.10,529.50 1223.10,529.50 1224.53,529.50 1224.53,529.50 1225.95,529.50 1225.95,529.50 1227.38,529.50 1227.38,529.50 1228.81,529.50 1228.81,529.50 1230.23,529.50 1230.23,529.50 1231.66,529.50 1231.66,529.50 1233.08,529.50 1233.08,529.50 1234.51,529.50 1234.51,529.50 1235.93,529.50 1235.93,529.50 1237.36,529.50 1237.36,529.50 1238.78,529.50 1238.78,529.50 1240.21,529.50 1240.21,529.50 1241.64,529.50 1241.64,529.50 1243.06,529.50 1243.06,529.50 1244.49,529.50 1244.49,529.50 1245.91,529.50 1245.91,529.50 1247.34,529.50 1247.34,529.50 1248.76,529.50 1248.76,529.50 1250.19,529.50 1250.19,529.50 1251.61,529.50 1251.61,529.50 1253.04,529.50 1253.04,529.50 1254.47,529.50 1254.47,529.50 1255.89,529.50 1255.89,529.50 1257.32,529.50 1257.32,529.50 1258.74,529.50 1258.74,529.50 1260.17,529.50 1260.17,529.50 1261.59,529.50 1261.59,529.50 1263.02,529.50 1263.02,529.50 1264.44,529.50 1264.44,529.50 1265.87,529.50 1265.87,529.50 1267.30,529.50 1267.30,529.50 1268.72,529.50 1268.72,529.50 1270.15,529.50 1270.15,529.50 1271.57,529.50 1271.57,529.50 1273.00,529.50 1273.00,529.50 1274.42,529.50 1274.42,529.50 1275.85,529.50 1275.85,529.50 1277.27,529.50 1277.27,529.50 1278.70,529.50 1278.70,529.50 1280.13,529.50 1280.13,529.50 1281.55,529.50 1281.55,529.50 1282.98,529.50 1282.98,529.50 1284.40,529.50 1284.40,529.50 1285.83,529.50 1285.83,529.50 1287.25,529.50 1287.25,529.50 1288.68,529.50 1288.68,529.50 1290.10,529.50 1290.10,529.50 1291.53,529.50 1291.53,529.50 1292.96,529.50 1292.96,529.50 1294.38,529.50 1294.38,529.50 1295.81,529.50 1295.81,529.50 1297.23,529.50 1297.23,529.50 1298.66,529.50 1298.66,529.50 1300.08,529.50 1300.08,529.50 1301.51,529.50 1301.51,529.50 1302.93,529.50 1302.93,529.50 1304.36,529.50 1304.36,529.50 1305.79,529.50 1305.79,529.50 1307.21,529.50 1307.21,529.50 1308.64,529.50 1308.64,529.50 1310.06,529.50 1310.06,529.50 1311.49,529.50 1311.49,529.50 1312.91,529.50 1312.91,529.50 1314.34,529.50 1314.34,529.50 1315.77,529.50 1315.77,529.50 1317.19,529.50 1317.19,529.50 1318.62,529.50 1318.62,529.50 1320.04,529.50 1320.04,529.50 1321.47,529.50 1321.47,529.50 1322.89,529.50 1322.89,529.50 1324.32,529.50 1324.32,529.50 1325.74,529.50 1325.74,529.50 1327.17,529.50 1327.17,529.50 1328.60,529.50 1328.60,529.50 1330.02,529.50 1330.02,529.50 1331.45,529.50 1331.45,529.50 1332.87,529.50 1332.87,529.50 1334.30,529.50 1334.30,529.50 1335.72,529.50 1335.72,529.50 1337.15,529.50 1337.15,529.50 1338.57,529.50 1338.57,529.50 1340.00,529.50 1340.00,529.50 1341.43,529.50 1341.43,529.50 1342.85,529.50 1342.85,529.50 1344.28,529.50 1344.28,529.50 1345.70,529.50 1345.70,529.50 1347.13,529.50 1347.13,529.50 1348.55,529.50 1348.55,529.50 1349.98,529.50 1349.98,529.50 1351.40,529.50 1351.40,529.50 1352.83,529.50 1352.83,529.50 1354.26,529.50 1354.26,529.50 1355.68,529.50 1355.68,529.50 1357.11,529.50 1357.11,529.50 1358.53,529.50 1358.53,529.50 1359.96,529.50 1359.96,529.50 1361.38,529.50 1361.38,529.50 1362.81,529.50 1362.81,529.50 1364.23,529.50 1364.23,529.50 1365.66,529.50 1365.66,529.50 1367.09,529.50 1367.09,529.50 1368.51,529.50 1368.51,529.50 1369.94,529.50 1369.94,529.50 1371.36,529.50 1371.36,529.50 1372.79,529.50 1372.79,529.50 1374.21,529.50 1374.21,529.50 1375.64,529.50 1375.64,529.50 1377.06,529.50 1377.06,529.50 1378.49,529.50 1378.49,529.50 1379.92,529.50 1379.92,529.50 1381.34,529.50 1381.34,529.50 1382.77,529.50 1382.77,529.50 1384.19,529.50 1384.19,529.50 1385.62,529.50 1385.62,529.50 1387.04,529.50 1387.04,529.50 1388.47,529.50 1388.47,529.50 1389.89,529.50 1389.89,529.50 1391.32,529.50 1391.32,529.50 1392.75,529.50 1392.75,529.50 1394.17,529.50 1394.17,529.50 1395.60,529.50 1395.60,529.50 1397.02,529.50 1397.02,529.50 1398.45,529.50 1398.45,529.50 1399.87,529.50 1399.87,529.50 1401.30,529.50 1401.30,529.50 1402.72,529.50 1402.72,529.50 1404.15,529.50 1404.15,529.50 1405.58,529.50 1405.58,529.50 1407.00,529.50 1407.00,529.50 1408.43,529.50 1408.43,529.50 1409.85,529.50 1409.85,529.50 1411.28,529.50 1411.28,529.50 1412.70,529.50 1412.70,529.50 1414.13,529.50 1414.13,529.50 1415.56,529.50 1415.56,529.50 1416.98,529.50 1416.98,529.50 1418.41,529.50 1418.41,529.50 1419.83,529.50 1419.83,529.50 1421.26,529.50 1421.26,529.50 1422.68,529.50 1422.68,529.50 1424.11,529.50 1424.11,529.50 1425.53,529.50 1425.53,529.50 1426.96,529.50 1426.96,529.50 1428.39,529.50 1428.39,529.50 1429.81,529.50 1429.81,529.50 1431.24,529.50 1431.24,529.50 1432.66,529.50 1432.66,529.50 1434.09,529.50 1434.09,529.50 1435.51,529.50 1435.51,529.50 1436.94,529.50 1436.94,529.50 1438.36,529.50 1438.36,529.50 1439.79,529.50 1439.79,529.50 1441.22,529.50 1441.22,529.50 1442.64,529.50 1442.64,529.50 1444.07,529.50 1444.07,529.50 1445.49,529.50 1445.49,529.50 1446.92,529.50 1446.92,529.50 1448.34,529.50 1448.34,529.50 1449.77,529.50 1449.77,529.50 1451.19,529.50 1451.19,529.50 1452.62,529.50 1452.62,529.50 1454.05,529.50 1454.05,529.50 1455.47,529.50 1455.47,529.50 1456.90,529.50 1456.90,529.50 1458.32,529.50 1458.32,529.50 1459.75,529.50 1459.75,529.50 1461.17,529.50 1461.17,529.50 1462.60,529.50 1462.60,529.50 1464.02,529.50 1464.02,529.50 1465.45,529.50 1465.45,529.50 1466.88,529.50 1466.88,529.50 1468.30,529.50 1468.30,529.50 1469.73,529.50 1469.73,529.50 1471.15,529.50 1471.15,529.50 1472.58,529.50 1472.58,529.50 1474.00,529.50 1474.00,529.50 1475.43,529.50 1475.43,529.50 1476.85,529.50 1476.85,529.50 1478.28,529.50 1478.28,529.50 1479.71,529.50 1479.71,529.50 1481.13,529.50 1481.13,529.50 1482.56,529.50 1482.56,529.50 1483.98,529.50 1483.98,529.50 1485.41,529.50 1485.41,529.50 1486.83,529.50 1486.83,529.50 1488.26,529.50 1488.26,529.50 1489.68,529.50 1489.68,529.50 1491.11,529.50 1491.11,529.50 1492.54,529.50 1492.54,529.50 1493.96,529.50 1493.96,529.50 1495.39,529.50 1495.39,529.50 1496.81,529.50 1496.81,529.50 1498.24,529.50 1498.24,529.50 1499.66,529.50 1499.66,529.50 1501.09,529.50 1501.09,529.50 1502.51,529.50 1502.51,529.50 1503.94,529.50 1503.94,529.50 1505.37,529.50 1505.37,529.50 1506.79,529.50 1506.79,529.50 1508.22,529.50 1508.22,529.50 1509.64,529.50 1509.64,529.50 1511.07,529.50 1511.07,529.50 1512.49,529.50 1512.49,529.50 1513.92,529.50 1513.92,529.50 1515.34,529.50 1515.34,529.50 1516.77,529.50 1516.77,529.50 1518.20,529.50 1518.20,529.50 1519.62,529.50 1519.62,529.50 1521.05,529.50 1521.05,529.50 1522.47,529.50 1522.47,529.50 1523.90,529.50 1523.90,529.50 1525.32,529.50 1525.32,529.50 1526.75,529.50 1526.75,529.50 1528.18,529.50 1528.18,529.50 1529.60,529.50 1529.60,529.50 1531.03,529.50 1531.03,529.50 1532.45,529.50 1532.45,529.50 1533.88,529.50 1533.88,529.50 1535.30,529.50 1535.30,529.50 1536.73,529.50 1536.73,529.50 1538.15,529.50 1538.15,529.50 1539.58,529.50 1539.58,529.50 1541.01,529.50 1541.01,529.50 1542.43,529.50 1542.43,529.50 1543.86,529.50 1543.86,529.50 1545.28,529.50 1545.28,529.50 1546.71,529.50 1546.71,529.50 1548.13,529.50 1548.13,529.50 1549.56,529.50 1549.56,529.50 1550.98,529.50 1550.98,529.5" fill="#9cff78"/><line x1="55.5" y1="529.6" x2="1585" y2="529.6" stroke="#a8f0e8" stroke-width="1"/><line x1="90" y1="531.2" x2="1550" y2="531.2" stroke="#c8261e" stroke-width="2"/><line x1="90" y1="529.9" x2="1550" y2="529.9" stroke="#f2f0c0" stroke-width="0.9"/><path d="M114.60,531.00 L115.50,500.00 L116.50,470.00 L117.00,450.00 L117.30,410.00 L117.50,330.00 L118.50,310.00 L120.00,299.50 L123.50,299.50 L124.70,330.00 L125.30,370.00 L125.60,400.00 L126.10,410.00 L126.50,450.00 L127.00,500.00 L127.50,531.00 Z" fill="#a00000" stroke="#e41a10" stroke-width="1.2" stroke-linejoin="round"/><path d="M139.60,531.00 L140.11,529.57 L140.62,526.71 L141.14,522.86 L141.65,517.93 L142.16,511.88 L142.68,504.81 L143.19,496.97 L143.70,488.76 L144.21,480.74 L144.72,473.52 L145.24,467.74 L145.75,463.94 L146.26,462.51 L146.78,463.58 L147.29,467.05 L147.80,472.57 L148.31,479.62 L148.82,487.56 L149.34,495.78 L149.85,503.70 L150.36,510.90 L150.88,517.11 L151.39,522.21 L151.90,531.00 Z" fill="#a00000" stroke="#e41a10" stroke-width="1.2" stroke-linejoin="round"/><path d="M558.00,531.00 L561.00,521.00 L564.60,506.00 L567.20,488.00 L570.00,470.00 L573.00,455.00 L575.90,447.50 L577.50,452.00 L579.50,470.00 L581.80,488.00 L584.00,510.00 L585.80,531.00 Z" fill="#a00000" stroke="#e41a10" stroke-width="1.2" stroke-linejoin="round"/><rect x="564.4" y="225.5" width="27.4" height="321.5" fill="rgba(255,250,40,0.30)"/><line x1="564.9" y1="225.5" x2="564.9" y2="547" stroke="#f0e878" stroke-width="1.6"/><line x1="591.4" y1="225.5" x2="591.4" y2="547" stroke="#e8e070" stroke-width="1.2"/><line x1="917.3" y1="225.5" x2="917.3" y2="547" stroke="#7ed8a0" stroke-width="1.2"/><line x1="55.5" y1="225.5" x2="55.5" y2="547.5" stroke="#dde4f5" stroke-width="1.3"/><line x1="55.5" y1="547" x2="1585" y2="547" stroke="#c8d2ee" stroke-width="1.3"/></svg><div class="t" style="left:68.49px;top:601.77px;font-size:10.90px;line-height:10.90px;color:#c5cff0;font-family:'Liberation Sans', sans-serif;">Start</div><div class="t" style="left:224.79px;top:601.77px;font-size:10.90px;line-height:10.90px;color:#c5cff0;font-family:'Liberation Sans', sans-serif;">Stop</div><div class="r" style="left:8.00px;top:621.00px;width:146.00px;height:23.50px;background:#78ad4a;border-radius:4px;box-shadow:0 0 0 1px rgba(6,12,56,0.55);"></div><div class="t" style="left:62.25px;top:626.82px;font-size:11.19px;line-height:11.19px;color:#f2ffe0;font-weight:bold;font-family:'Liberation Sans', sans-serif;">START</div><div class="r" style="left:163.00px;top:621.00px;width:147.00px;height:23.50px;background:#cf2d2a;border-radius:4px;box-shadow:0 0 0 1px rgba(6,12,56,0.55);"></div><div class="t" style="left:222.00px;top:626.82px;font-size:11.19px;line-height:11.19px;color:#fff2f0;font-weight:bold;transform:scaleX(0.9581);transform-origin:0 0;font-family:'Liberation Sans', sans-serif;">STOP</div><div class="t" style="left:52.80px;top:660.77px;font-size:10.90px;line-height:10.90px;color:#c5cff0;transform:scaleX(0.9351);transform-origin:0 0;font-family:'Liberation Sans', sans-serif;">Total counts</div><div class="t" style="left:207.50px;top:660.77px;font-size:10.90px;line-height:10.90px;color:#c5cff0;transform:scaleX(0.9045);transform-origin:0 0;font-family:'Liberation Sans', sans-serif;">Elapsed time</div><div class="t" style="left:36.70px;top:680.15px;font-size:24.27px;line-height:24.27px;color:#ffffff;font-weight:bold;transform:scaleX(1.0939);transform-origin:0 0;font-family:'Liberation Sans', sans-serif;">127319</div><div class="t" style="left:214.00px;top:680.15px;font-size:24.27px;line-height:24.27px;color:#ffffff;font-weight:bold;transform:scaleX(1.0865);transform-origin:0 0;font-family:'Liberation Sans', sans-serif;">410</div><div class="t" style="left:44.50px;top:717.77px;font-size:10.90px;line-height:10.90px;color:#c5cff0;transform:scaleX(0.9763);transform-origin:0 0;font-family:'Liberation Sans', sans-serif;">Stop at counts.</div><div class="t" style="left:199.00px;top:717.77px;font-size:10.90px;line-height:10.90px;color:#c5cff0;transform:scaleX(0.9466);transform-origin:0 0;font-family:'Liberation Sans', sans-serif;">Stop at seconds</div><div class="r" style="left:8.00px;top:731.50px;width:145.50px;height:21.00px;background:#b8c9f2;border-radius:4px;"></div><div class="r" style="left:163.30px;top:731.50px;width:145.70px;height:21.00px;background:#b8c9f2;border-radius:4px;"></div><div class="t" style="left:60.70px;top:735.25px;font-size:12.94px;line-height:12.94px;color:#1c1c2a;transform:scaleX(0.7943);transform-origin:0 0;font-family:'Liberation Sans', sans-serif;">9999999</div><div class="t" style="left:216.20px;top:735.25px;font-size:12.94px;line-height:12.94px;color:#1c1c2a;transform:scaleX(0.7943);transform-origin:0 0;font-family:'Liberation Sans', sans-serif;">9999999</div><div class="t" style="left:53.50px;top:765.57px;font-size:10.90px;line-height:10.90px;color:#c5cff0;transform:scaleX(0.9506);transform-origin:0 0;font-family:'Liberation Sans', sans-serif;">Lost counts</div><div class="t" style="left:228.75px;top:765.57px;font-size:10.90px;line-height:10.90px;color:#c5cff0;transform:scaleX(0.8547);transform-origin:0 0;font-family:'Liberation Sans', sans-serif;">cps</div><div class="t" style="left:71.50px;top:784.52px;font-size:10.61px;line-height:10.61px;color:#d8def2;transform:scaleX(0.9603);transform-origin:0 0;font-family:'Liberation Sans', sans-serif;">362</div><div class="t" style="left:227.50px;top:784.52px;font-size:10.61px;line-height:10.61px;color:#d8def2;transform:scaleX(0.9603);transform-origin:0 0;font-family:'Liberation Sans', sans-serif;">290</div><div class="t" style="left:372.00px;top:602.67px;font-size:10.90px;line-height:10.90px;color:#c5cff0;transform:scaleX(0.8699);transform-origin:0 0;font-family:'Liberation Sans', sans-serif;">Filename</div><div class="r" style="left:319.00px;top:623.00px;width:145.00px;height:21.00px;background:#b8c9f2;border-radius:4px;"></div><div class="t" style="left:326.00px;top:627.29px;font-size:12.06px;line-height:12.06px;color:#2a2a3a;transform:scaleX(0.8862);transform-origin:0 0;font-family:'Liberation Sans', sans-serif;">LaBr3_cs137</div><div class="t" style="left:358.25px;top:663.37px;font-size:10.90px;line-height:10.90px;color:#c5cff0;transform:scaleX(0.9303);transform-origin:0 0;font-family:'Liberation Sans', sans-serif;">Pitch (bin size)</div><div class="r" style="left:319.00px;top:684.00px;width:145.00px;height:21.00px;background:#b8c9f2;border-radius:4px;"></div><div class="t" style="left:381.75px;top:688.09px;font-size:12.06px;line-height:12.06px;color:#1c1c2a;transform:scaleX(0.8305);transform-origin:0 0;font-family:'Liberation Sans', sans-serif;">10.0</div><div class="t" style="left:318.60px;top:714.57px;font-size:10.90px;line-height:10.90px;color:#c5cff0;transform:scaleX(0.9437);transform-origin:0 0;font-family:'Liberation Sans', sans-serif;">Select number of bins</div><div class="r" style="left:319.00px;top:731.80px;width:145.00px;height:20.50px;background:#b8c9f2;border-radius:4px;"></div><div class="r" style="left:451.00px;top:732.30px;width:12.50px;height:19.50px;background:#c2d0f2;border-radius:0px;box-sizing:border-box;border-left:1px solid #a9b8e0;box-shadow:0 1px 0 #8090c0;border-radius:0 3px 3px 0;"></div><div class="r" style="left:453.0px;top:740.5px;width:0;height:0;border-left:4px solid transparent;border-right:4px solid transparent;border-top:4px solid #111"></div><div class="t" style="left:325.00px;top:735.77px;font-size:12.50px;line-height:12.50px;color:#1a1a24;transform:scaleX(0.8454);transform-origin:0 0;font-family:'Liberation Sans', sans-serif;">1024 Bins</div><div class="t" style="left:348.50px;top:763.87px;font-size:10.90px;line-height:10.90px;color:#c5cff0;transform:scaleX(0.9400);transform-origin:0 0;font-family:'Liberation Sans', sans-serif;">Open spectrum file</div><div class="r" style="left:319.00px;top:776.00px;width:145.00px;height:21.00px;background:#b8c9f2;border-radius:4px;"></div><div class="r" style="left:451.00px;top:776.50px;width:12.50px;height:20.00px;background:#c2d0f2;border-radius:0px;box-sizing:border-box;border-left:1px solid #a9b8e0;box-shadow:0 1px 0 #8090c0;border-radius:0 3px 3px 0;"></div><div class="r" style="left:453.0px;top:785.0px;width:0;height:0;border-left:4px solid transparent;border-right:4px solid transparent;border-top:4px solid #111"></div><div class="t" style="left:324.00px;top:780.22px;font-size:12.50px;line-height:12.50px;color:#1a1a24;transform:scaleX(0.8823);transform-origin:0 0;font-family:'Liberation Sans', sans-serif;">— Select file —</div><div class="t" style="left:485.00px;top:602.77px;font-size:10.90px;line-height:10.90px;color:#c5cff0;transform:scaleX(0.9148);transform-origin:0 0;font-family:'Liberation Sans', sans-serif;">LLD (bins)</div><div class="t" style="left:560.00px;top:602.77px;font-size:10.90px;line-height:10.90px;color:#c5cff0;transform:scaleX(0.9711);transform-origin:0 0;font-family:'Liberation Sans', sans-serif;">Interval (s)</div><div class="r" style="left:474.00px;top:623.00px;width:68.30px;height:21.00px;background:#b8c9f2;border-radius:4px;"></div><div class="r" style="left:551.00px;top:623.00px;width:68.00px;height:21.00px;background:#b8c9f2;border-radius:4px;"></div><div class="t" style="left:502.50px;top:627.29px;font-size:12.06px;line-height:12.06px;color:#1c1c2a;transform:scaleX(0.8197);transform-origin:0 0;font-family:'Liberation Sans', sans-serif;">20</div><div class="t" style="left:581.65px;top:627.29px;font-size:12.06px;line-height:12.06px;color:#1c1c2a;font-family:'Liberation Sans', sans-serif;">1</div><div class="t" style="left:491.00px;top:663.37px;font-size:10.90px;line-height:10.90px;color:#c5cff0;transform:scaleX(0.9746);transform-origin:0 0;font-family:'Liberation Sans', sans-serif;">Distortion tolerance (%)</div><div class="r" style="left:474.00px;top:684.00px;width:145.00px;height:21.00px;background:#b8c9f2;border-radius:4px;"></div><div class="t" style="left:541.00px;top:688.09px;font-size:12.06px;line-height:12.06px;color:#1c1c2a;transform:scaleX(0.8197);transform-origin:0 0;font-family:'Liberation Sans', sans-serif;">39</div><div class="r" style="left:474.00px;top:725.70px;width:15.20px;height:15.20px;background:#b8c9f2;border-radius:3px;"></div><div class="t" style="left:495.00px;top:721.45px;font-size:11.63px;line-height:11.63px;color:#c5cff0;transform:scaleX(0.9283);transform-origin:0 0;font-family:'Liberation Sans', sans-serif;">Show</div><div class="t" style="left:495.00px;top:733.65px;font-size:11.63px;line-height:11.63px;color:#c5cff0;transform:scaleX(0.9151);transform-origin:0 0;font-family:'Liberation Sans', sans-serif;">comparison</div><div class="t" style="left:498.00px;top:763.77px;font-size:10.90px;line-height:10.90px;color:#c5cff0;transform:scaleX(0.9097);transform-origin:0 0;font-family:'Liberation Sans', sans-serif;">Comparison spectrum</div><div class="r" style="left:474.00px;top:776.00px;width:145.00px;height:21.00px;background:#b8c9f2;border-radius:4px;"></div><div class="r" style="left:606.00px;top:776.50px;width:12.50px;height:20.00px;background:#c2d0f2;border-radius:0px;box-sizing:border-box;border-left:1px solid #a9b8e0;box-shadow:0 1px 0 #8090c0;border-radius:0 3px 3px 0;"></div><div class="r" style="left:608.0px;top:785.0px;width:0;height:0;border-left:4px solid transparent;border-right:4px solid transparent;border-top:4px solid #111"></div><div class="t" style="left:479.50px;top:780.22px;font-size:12.50px;line-height:12.50px;color:#1a1a24;transform:scaleX(0.8445);transform-origin:0 0;font-family:'Liberation Sans', sans-serif;">• 13can16o</div><div class="t" style="left:661.50px;top:601.67px;font-size:10.90px;line-height:10.90px;color:#c5cff0;transform:scaleX(0.9044);transform-origin:0 0;font-family:'Liberation Sans', sans-serif;">Download csv File</div><div class="r" style="left:628.60px;top:621.30px;width:146.00px;height:23.20px;background:#e47e24;border-radius:4px;box-shadow:0 0 0 1px rgba(6,12,56,0.55);"></div><div class="t" style="left:664.00px;top:626.65px;font-size:11.63px;line-height:11.63px;color:#fff4e4;font-weight:bold;transform:scaleX(0.9594);transform-origin:0 0;font-family:'Liberation Sans', sans-serif;">Download csv</div><div class="r" style="left:628.80px;top:671.40px;width:15.20px;height:15.20px;background:#b8c9f2;border-radius:3px;"></div><div class="t" style="left:650.00px;top:673.15px;font-size:11.63px;line-height:11.63px;color:#c5cff0;transform:scaleX(0.9142);transform-origin:0 0;font-family:'Liberation Sans', sans-serif;">Coincidence</div><div class="r" style="left:628.80px;top:725.70px;width:15.20px;height:15.20px;background:#b8c9f2;border-radius:3px;"></div><div class="t" style="left:650.00px;top:720.65px;font-size:11.63px;line-height:11.63px;color:#c5cff0;transform:scaleX(0.9238);transform-origin:0 0;font-family:'Liberation Sans', sans-serif;">Subtract</div><div class="t" style="left:650.00px;top:732.95px;font-size:11.63px;line-height:11.63px;color:#c5cff0;transform:scaleX(0.9151);transform-origin:0 0;font-family:'Liberation Sans', sans-serif;">comparison</div><div class="t" style="left:652.00px;top:763.77px;font-size:10.90px;line-height:10.90px;color:#c5cff0;transform:scaleX(0.9390);transform-origin:0 0;font-family:'Liberation Sans', sans-serif;">Select Isotope Library</div><div class="r" style="left:628.80px;top:776.00px;width:145.20px;height:21.00px;background:#b8c9f2;border-radius:4px;"></div><div class="r" style="left:761.00px;top:776.50px;width:12.50px;height:20.00px;background:#c2d0f2;border-radius:0px;box-sizing:border-box;border-left:1px solid #a9b8e0;box-shadow:0 1px 0 #8090c0;border-radius:0 3px 3px 0;"></div><div class="r" style="left:763.0px;top:785.0px;width:0;height:0;border-left:4px solid transparent;border-right:4px solid transparent;border-top:4px solid #111"></div><div class="t" style="left:634.00px;top:780.22px;font-size:12.50px;line-height:12.50px;color:#1a1a24;transform:scaleX(0.8638);transform-origin:0 0;font-family:'Liberation Sans', sans-serif;">A Gamma</div><div class="r" style="left:783.80px;top:610.60px;width:15.20px;height:15.20px;background:#b8c9f2;border-radius:3px;"></div><div class="t" style="left:805.00px;top:612.69px;font-size:12.06px;line-height:12.06px;color:#c5cff0;transform:scaleX(0.9009);transform-origin:0 0;font-family:'Liberation Sans', sans-serif;">Energy / bin</div><div class="r" style="left:783.80px;top:671.80px;width:15.20px;height:15.20px;background:#b8c9f2;border-radius:3px;"></div><div class="t" style="left:805.00px;top:673.29px;font-size:12.06px;line-height:12.06px;color:#c5cff0;transform:scaleX(0.8773);transform-origin:0 0;font-family:'Liberation Sans', sans-serif;">Log(y)</div><div class="r" style="left:783.80px;top:725.40px;width:15.20px;height:15.20px;background:#ff0000;border-radius:3px;"></div><div class="t" style="left:805.00px;top:727.09px;font-size:12.06px;line-height:12.06px;color:#c5cff0;transform:scaleX(0.8757);transform-origin:0 0;font-family:'Liberation Sans', sans-serif;">Calibration</div><div class="r" style="left:783.80px;top:771.90px;width:15.20px;height:15.20px;background:#b8c9f2;border-radius:3px;"></div><div class="t" style="left:805.00px;top:773.29px;font-size:12.06px;line-height:12.06px;color:#c5cff0;transform:scaleX(0.8922);transform-origin:0 0;font-family:'Liberation Sans', sans-serif;">Show linearity</div><div class="t" style="left:1029.25px;top:601.69px;font-size:12.06px;line-height:12.06px;color:#e8ecf8;transform:scaleX(0.9451);transform-origin:0 0;font-family:'Liberation Sans', sans-serif;">Sigma: 0.2</div><div class="r" style="left:946.60px;top:625.00px;width:220.40px;height:6.70px;background:#8a8a94;border-radius:3.3px;"></div><div class="r" style="left:946.60px;top:625.00px;width:17.40px;height:6.70px;background:#4caf50;border-radius:3.3px;"></div><div class="r" style="left:961.90px;top:622.90px;width:14.70px;height:10.20px;background:#ffffff;border-radius:5px;"></div><div class="t" style="left:992.25px;top:662.75px;font-size:11.63px;line-height:11.63px;color:#e8ecf8;font-family:'Liberation Sans', sans-serif;">Auto select Width Default</div><div class="r" style="left:946.60px;top:686.00px;width:220.40px;height:6.80px;background:#8a8a94;border-radius:3.3px;"></div><div class="r" style="left:948.40px;top:684.00px;width:14.70px;height:10.30px;background:#ffffff;border-radius:5px;"></div><div class="t" style="left:946.60px;top:727.94px;font-size:12.35px;line-height:12.35px;color:#eef1fa;font-family:'Liberation Sans', sans-serif;">E = 0.000000x² + 1.932977x + 0.000000</div><div class="t" style="left:1375.40px;top:593.15px;font-size:11.05px;line-height:11.05px;color:#c5cff0;transform:scaleX(0.9597);transform-origin:0 0;font-family:'Liberation Sans', sans-serif;">Notes written to my_spectrum.json</div><div class="r" style="left:1330.90px;top:616.70px;width:215.10px;height:88.00px;background:#b8c9f2;border-radius:4px;"></div><div class="t" style="left:1339.00px;top:625.93px;font-size:9.88px;line-height:9.88px;color:#8c96b4;transform:scaleX(1.1189);transform-origin:0 0;font-family:'Liberation Mono', monospace;">Enter notes about this</div><div class="t" style="left:1339.00px;top:639.83px;font-size:9.88px;line-height:9.88px;color:#8c96b4;transform:scaleX(1.1189);transform-origin:0 0;font-family:'Liberation Mono', monospace;">spectrum...</div><div class="t" style="left:1341.92px;top:723.77px;font-size:52px;line-height:52px;color:#1a7ff5;font-weight:bold;transform:scaleX(1.0110);transform-origin:0 0;font-family:'Liberation Sans',sans-serif">i</div><div class="t" style="left:1360.88px;top:723.77px;font-size:52px;line-height:52px;color:#1a7ff5;font-weight:bold;transform:scaleX(1.0248);transform-origin:0 0;font-family:'Liberation Sans',sans-serif">m</div><div class="t" style="left:1413.46px;top:723.77px;font-size:52px;line-height:52px;color:#1a7ff5;font-weight:bold;transform:scaleX(1.0037);transform-origin:0 0;font-family:'Liberation Sans',sans-serif">p</div><div class="t" style="left:1451.35px;top:723.77px;font-size:52px;line-height:52px;color:#1a7ff5;font-weight:bold;transform:scaleX(0.9776);transform-origin:0 0;font-family:'Liberation Sans',sans-serif">u</div><div class="t" style="left:1487.85px;top:723.77px;font-size:52px;line-height:52px;color:#1a7ff5;font-weight:bold;transform:scaleX(0.9474);transform-origin:0 0;font-family:'Liberation Sans',sans-serif">l</div><div class="t" style="left:1506.63px;top:723.77px;font-size:52px;line-height:52px;color:#1a7ff5;font-weight:bold;transform:scaleX(0.9977);transform-origin:0 0;font-family:'Liberation Sans',sans-serif">s</div><div class="t" style="left:1541.28px;top:723.77px;font-size:52px;line-height:52px;color:#1a7ff5;font-weight:bold;transform:scaleX(1.0216);transform-origin:0 0;font-family:'Liberation Sans',sans-serif">e</div><div class="r" style="left:1344.10px;top:770.00px;width:68.30px;height:3.00px;background:#1a7ff5;border-radius:0px;"></div><div class="r" style="left:1431.10px;top:770.00px;width:136.30px;height:3.00px;background:#1a7ff5;border-radius:0px;"></div><div class="t" style="left:1344.50px;top:775.17px;font-size:9.01px;line-height:9.01px;color:#1a7ff5;font-weight:bold;font-family:'Liberation Sans', sans-serif;">and more from</div><div class="t" style="left:1463.10px;top:775.17px;font-size:9.01px;line-height:9.01px;color:#1a7ff5;font-weight:bold;font-family:'Liberation Sans', sans-serif;">Gammaspectacular.com</div><div class="t" style="left:586.00px;top:809.50px;font-size:18.90px;line-height:18.90px;color:#ffffff;transform:scaleX(1.0690);transform-origin:0 0;font-family:'Liberation Sans', sans-serif;-webkit-text-stroke:0.5px #ffffff;">ImpulseQt (3.2.3.0) by GammaSpectacular.com</div><div class="t" style="left:12.50px;top:846.40px;font-size:11.63px;line-height:11.63px;color:#80d890;transform:scaleX(0.9283);transform-origin:0 0;font-family:'Liberation Sans', sans-serif;">Sigma set to 0.2</div><svg class="r" style="left:0;top:860px" width="1600" height="40" viewBox="0 860 1600 40"><defs>
<linearGradient id="sun" x1="0" y1="0" x2="1" y2="1"><stop offset="0" stop-color="#f4c030"/><stop offset="1" stop-color="#f47a18"/></linearGradient>
<linearGradient id="win" x1="0" y1="0" x2="1" y2="1"><stop offset="0" stop-color="#7ad8ff"/><stop offset="1" stop-color="#3aa8f0"/></linearGradient>
<linearGradient id="omg" x1="0" y1="1" x2="1" y2="0"><stop offset="0" stop-color="#2040f0"/><stop offset="0.5" stop-color="#8040c0"/><stop offset="1" stop-color="#f02030"/></linearGradient>
<linearGradient id="edge" x1="0" y1="1" x2="1" y2="0"><stop offset="0" stop-color="#1060d0"/><stop offset="0.6" stop-color="#20a0e0"/><stop offset="1" stop-color="#60e070"/></linearGradient>
<linearGradient id="cop" x1="0" y1="0" x2="1" y2="1"><stop offset="0" stop-color="#2090f0"/><stop offset="0.35" stop-color="#40c080"/><stop offset="0.65" stop-color="#f0a030"/><stop offset="1" stop-color="#e04890"/></linearGradient>
</defs><rect x="0" y="860" width="1600" height="40" fill="#4b0f5e"/><rect x="0" y="860" width="1600" height="1" fill="#6b3a86"/><circle cx="25.8" cy="879.7" r="8.3" fill="url(#sun)"/><circle cx="31.7" cy="871" r="6" fill="#f6a4b4"/><text x="31.7" y="874.3" font-family="Liberation Sans" font-size="9" font-weight="bold" fill="#3a1a2a" text-anchor="middle">4</text><text x="41.9" y="876.8" font-family="Liberation Sans" font-size="9.4" font-weight="bold" fill="#f2dcf6">57°F</text><text x="41.9" y="889.6" font-family="Liberation Sans" font-size="9.6" fill="#e8c8f0">Sunny</text><rect x="458.7" y="870.7" width="9.6" height="9.6" fill="url(#win)"/><rect x="468.9" y="870.7" width="9.6" height="9.6" fill="url(#win)"/><rect x="458.7" y="880.5" width="9.6" height="9.6" fill="url(#win)"/><rect x="468.9" y="880.5" width="9.6" height="9.6" fill="url(#win)"/><rect x="489.3" y="866.9" width="182.7" height="26.1" rx="13" fill="#6a2c82" stroke="#7a4092" stroke-width="0.8"/><circle cx="503.5" cy="878.5" r="4.3" fill="none" stroke="#e8d8f0" stroke-width="1.4"/><line x1="506.5" y1="881.5" x2="510" y2="885" stroke="#e8d8f0" stroke-width="1.5"/><text x="520.3" y="884.1" font-family="Liberation Sans" font-size="11.2" fill="#dccbe6">Search</text><path d="M633 889 Q650 879 671 882 L668 890 Q650 894 633 889 Z" fill="#a8d0ee"/><ellipse cx="652" cy="879.5" rx="8.5" ry="5.2" fill="#e4dfe8"/><circle cx="643.5" cy="875" r="3.4" fill="#f2eef4"/><rect x="645" y="882" width="2.2" height="6" fill="#dcd6e2"/><rect x="656" y="882" width="2.2" height="5.5" fill="#d0cad8"/><rect x="682.5" y="876" width="14.8" height="12.4" fill="#6e6e72"/><rect x="687.8" y="870.9" width="14.9" height="13.1" fill="#f2f2f4"/><rect x="687.8" y="876" width="9.5" height="8" fill="#b8b8bc"/><linearGradient id="copL" x1="0" y1="0" x2="0" y2="1"><stop offset="0" stop-color="#2a8cf0"/><stop offset="0.5" stop-color="#38c060"/><stop offset="1" stop-color="#f0c020"/></linearGradient><linearGradient id="copR" x1="0" y1="0" x2="0" y2="1"><stop offset="0" stop-color="#b050e0"/><stop offset="0.5" stop-color="#f05090"/><stop offset="1" stop-color="#f89040"/></linearGradient><path d="M723.5 871.7 L730.6 871.7 Q731.5 872 731 873.5 L727 884.5 Q726.3 886 724.8 886 L721 886 Q719.8 885.5 720.2 884 Z" fill="url(#copL)"/><path d="M731.5 875.8 L737.3 875.8 Q738.5 876.3 738.1 877.6 L735.2 887 Q734.6 888 733.3 888 L727.3 888 Q726 887.5 726.5 886.3 Z" fill="url(#copR)"/><path d="M730.7 873 L726.6 885.8" stroke="#3a0a4a" stroke-width="0.9"/><circle cx="763" cy="872.6" r="2.9" fill="#9da2f4"/><circle cx="770.9" cy="874.7" r="2.4" fill="#8f94f0"/><rect x="767" y="877.8" width="7.2" height="10.4" rx="2.2" fill="#7d84e8"/><rect x="757.6" y="876.4" width="11" height="12.2" rx="2.5" fill="#8c92f2"/><rect x="756.5" y="879.4" width="7.3" height="7.7" rx="1.3" fill="#3e44b4"/><path d="M758.3 881.3 H762 M760.15 881.3 V885.5" stroke="#f0f0ff" stroke-width="1.2"/><linearGradient id="edgeTop" x1="0" y1="0" x2="1" y2="0.3"><stop offset="0" stop-color="#3aaff2"/><stop offset="0.55" stop-color="#2cc6c0"/><stop offset="1" stop-color="#72e06a"/></linearGradient><linearGradient id="edgeBot" x1="0" y1="0" x2="0.6" y2="1"><stop offset="0" stop-color="#2a8cf0"/><stop offset="1" stop-color="#1a5ec8"/></linearGradient><circle cx="802.3" cy="879.8" r="10.2" fill="url(#edgeBot)"/><path d="M792.3 879.5 Q793 869.6 802.3 869.6 Q812.5 869.8 812.5 879.5 Q812.3 883.6 808.3 883.6 Q804.8 883.4 804.6 880 Q804.2 876.8 801.2 876.8 Q796 877 794.5 881.5 Z" fill="url(#edgeTop)"/><ellipse cx="801.9" cy="880.9" rx="2.5" ry="2.9" fill="#2a1f78"/><path d="M804.8 883.3 Q808.3 885.8 812.4 883.2 L812.2 885.6 Q808.8 888 805.5 886.2 Z" fill="#3a1a6a"/><path d="M829.1 873 L837 873 L839 875 L849.3 875 L849.3 888.7 L829.1 888.7 Z" fill="#f8d048"/><rect x="829.1" y="871" width="8" height="3" rx="1" fill="#e0a820"/><rect x="833.3" y="883.4" width="11.9" height="5.3" rx="1" fill="#2a7ad0"/><rect x="836.9" y="893.1" width="4.7" height="2.2" rx="1" fill="#b8a8c8"/><rect x="865.9" y="870.3" width="20.2" height="19" fill="#10891a"/><circle cx="876" cy="879.8" r="7.9" fill="#f6faf6"/><path d="M870.8 873.8 Q876 877.5 881.2 886 M881.2 873.8 Q876 877.5 870.8 886" stroke="#10891a" stroke-width="2" fill="none"/><circle cx="883.8" cy="872.1" r="6" fill="#c66ae0"/><text x="883.8" y="875.6" font-family="Liberation Sans" font-size="9" font-weight="bold" fill="#2a0a3a" text-anchor="middle">1</text><rect x="902.2" y="869.7" width="20.2" height="19.9" fill="url(#omg)"/><path d="M906.5 885.5 Q905.5 881 906.5 877.5 Q908 873.3 912.3 873.3 Q916.6 873.3 918.1 877.5 Q919.1 881 918.1 885.5" stroke="#f4ecfa" stroke-width="1.3" fill="none"/><path d="M909.5 885.5 Q909 882 909.6 879.5 Q910.3 876.8 912.3 876.8 Q914.3 876.8 915 879.5 Q915.6 882 915.1 885.5 Z" stroke="#f4ecfa" stroke-width="1.2" fill="#6040b0"/><circle cx="949.1" cy="879.8" r="10.3" fill="#2da44e"/><path d="M949.1 879.8 L940.2 874.65 A10.3 10.3 0 0 1 958 874.65 Z" fill="#e8453c"/><path d="M949.1 879.8 L958 874.65 A10.3 10.3 0 0 1 949.1 890.1 Z" fill="#f6c02a"/><circle cx="949.1" cy="879.8" r="4.8" fill="#ffffff"/><circle cx="949.1" cy="879.8" r="3.7" fill="#3a7ef0"/><circle cx="1022.1" cy="879.8" r="10" fill="#5a66f0"/><path d="M1015.5 884 Q1015 878 1017.5 875.5 Q1022 874 1026.5 875.5 Q1029 878 1028.7 884 Q1026 886 1024.5 885 L1023.8 884 Q1022.1 884.6 1020.4 884 L1019.7 885 Q1018 886 1015.5 884 Z" fill="#fff"/><ellipse cx="1019.5" cy="880.5" rx="1.3" ry="1.5" fill="#5a66f0"/><ellipse cx="1024.7" cy="880.5" rx="1.3" ry="1.5" fill="#5a66f0"/><circle cx="1029.8" cy="872.1" r="6.2" fill="#e63c3c"/><text x="1029.8" y="875.3" font-family="Liberation Sans" font-size="8" font-weight="bold" fill="#fff" text-anchor="middle">9+</text><rect x="1019.3" y="893.3" width="5.6" height="2.2" rx="1" fill="#b8a8c8"/><rect x="1049" y="869.5" width="20.3" height="20.3" fill="#f6f400"/><rect x="1051" y="883" width="1.2" height="6.7999999999999545" fill="#222"/><rect x="1053" y="880" width="1.2" height="9.799999999999955" fill="#ddd"/><rect x="1054.5" y="876" width="1.2" height="13.799999999999955" fill="#111"/><rect x="1056.3" y="872" width="1.2" height="17.799999999999955" fill="#ccc"/><rect x="1058" y="874" width="1.2" height="15.799999999999955" fill="#111"/><rect x="1059.7" y="877" width="1.2" height="12.799999999999955" fill="#eee"/><rect x="1061.3" y="883" width="1.2" height="6.7999999999999545" fill="#222"/><rect x="1063" y="885" width="1.2" height="4.7999999999999545" fill="#ddd"/><rect x="1065" y="886" width="1.2" height="3.7999999999999545" fill="#222"/><rect x="1056.9" y="893.5" width="4.9" height="1.9" rx="1" fill="#b8a8c8"/><rect x="1085.9" y="869.9" width="20.1" height="20" rx="1.5" fill="#d2e2fa"/><path d="M1087.5 876 L1091.5 873 L1094 876.5 L1097.5 871.5 L1104 886 L1097 881 Z" fill="#e06a34"/><rect x="1093.3" y="893.5" width="4.8" height="1.9" rx="1" fill="#b8a8c8"/><rect x="1115.8" y="863.1" width="33" height="33.4" rx="4" fill="#5c2374"/><rect x="1122.9" y="872.1" width="18" height="15" fill="#f4f6f6"/><rect x="1124.3" y="874.5" width="6.5" height="10.5" fill="#3a8a8a"/><rect x="1124.3" y="879" width="6.5" height="6" fill="#40a070"/><rect x="1132.5" y="875" width="6" height="1" fill="#a0a8a8"/><rect x="1132.5" y="878" width="6" height="1" fill="#a0a8a8"/><rect x="1132.5" y="881" width="6" height="1" fill="#a0a8a8"/><rect x="1138.5" y="873.5" width="1.2" height="5" fill="#2a5a5a"/><rect x="1125.9" y="893.1" width="12.7" height="2.7" rx="1.3" fill="#d47ae6"/><path d="M1390 882 L1394.5 877.5 L1399 882" stroke="#f4eaf8" stroke-width="1.3" fill="none"/><path d="M1414 884.6 Q1412.5 880 1416.5 879 Q1417.5 874.5 1421.5 875 Q1425.5 875.5 1425.5 879.5 Q1428 881 1426 884.6 Z" fill="#d8d0de"/><circle cx="1423.4" cy="883.6" r="4" fill="#2a7ae0"/><rect x="1422.9" y="882.5" width="1" height="3.2" fill="#fff"/><rect x="1422.9" y="880.8" width="1" height="1" fill="#fff"/><rect x="1445.5" y="872.9" width="5" height="9" rx="2.5" fill="none" stroke="#e4b4ee" stroke-width="1.1"/><path d="M1443.2 879.5 Q1443.2 884.5 1448 884.5 Q1452.8 884.5 1452.8 879.5 M1448 884.5 L1448 886.5" stroke="#e4b4ee" stroke-width="1.1" fill="none"/><path d="M1467.5 878 Q1474 872 1480.5 878 M1469.7 880.3 Q1474 876.3 1478.3 880.3 M1471.9 882.4 Q1474 880.5 1476.1 882.4" stroke="#f6eef8" stroke-width="1.3" fill="none"/><circle cx="1474" cy="884" r="0.9" fill="#f6eef8"/><path d="M1487.2 877.5 L1490 877.5 L1493.5 874.5 L1493.5 885 L1490 882 L1487.2 882 Z" fill="none" stroke="#f2e6f6" stroke-width="1.1"/><path d="M1495.5 877 Q1497 879.8 1495.5 882.5 M1497.8 875.3 Q1500.5 879.8 1497.8 884.3" stroke="#f2e6f6" stroke-width="1.1" fill="none"/><rect x="1507" y="876.5" width="15.5" height="7.3" rx="1.6" fill="#a4d8a4" stroke="#f0f0f0" stroke-width="1"/><rect x="1522.8" y="878.5" width="1.3" height="3.3" fill="#f0f0f0"/><path d="M1515.5 873.3 L1513 877.5 L1515.5 877.5 L1514.5 880.5 L1517.5 876 L1515 876 Z" fill="#f4f4f4"/><text x="1583.4" y="876.7" font-family="Liberation Sans" font-size="9.6" fill="#f6eaf8" text-anchor="end">1:03 PM</text><text x="1583.8" y="889.6" font-family="Liberation Sans" font-size="9.6" fill="#f6eaf8" text-anchor="end">2/27/2026</text></svg><div class="t" style="left:46.70px;top:525.12px;font-size:11.19px;line-height:11.19px;color:#d6ddf2;transform:scaleX(0.8033);transform-origin:0 0;font-family:'Liberation Sans', sans-serif;">0</div><div class="t" style="left:36.70px;top:473.20px;font-size:11.19px;line-height:11.19px;color:#d6ddf2;transform:scaleX(0.8033);transform-origin:0 0;font-family:'Liberation Sans', sans-serif;">500</div><div class="t" style="left:31.70px;top:421.28px;font-size:11.19px;line-height:11.19px;color:#d6ddf2;transform:scaleX(0.8033);transform-origin:0 0;font-family:'Liberation Sans', sans-serif;">1000</div><div class="t" style="left:31.70px;top:369.36px;font-size:11.19px;line-height:11.19px;color:#d6ddf2;transform:scaleX(0.8033);transform-origin:0 0;font-family:'Liberation Sans', sans-serif;">1500</div><div class="t" style="left:31.70px;top:317.44px;font-size:11.19px;line-height:11.19px;color:#d6ddf2;transform:scaleX(0.8033);transform-origin:0 0;font-family:'Liberation Sans', sans-serif;">2000</div><div class="t" style="left:31.70px;top:265.52px;font-size:11.19px;line-height:11.19px;color:#d6ddf2;transform:scaleX(0.8033);transform-origin:0 0;font-family:'Liberation Sans', sans-serif;">2500</div><div class="t" style="left:88.65px;top:549.52px;font-size:11.19px;line-height:11.19px;color:#d6ddf2;transform:scaleX(0.8194);transform-origin:0 0;font-family:'Liberation Sans', sans-serif;">0</div><div class="t" style="left:230.98px;top:549.52px;font-size:11.19px;line-height:11.19px;color:#d6ddf2;transform:scaleX(0.8194);transform-origin:0 0;font-family:'Liberation Sans', sans-serif;">200</div><div class="t" style="left:378.41px;top:549.52px;font-size:11.19px;line-height:11.19px;color:#d6ddf2;transform:scaleX(0.8194);transform-origin:0 0;font-family:'Liberation Sans', sans-serif;">400</div><div class="t" style="left:525.84px;top:549.52px;font-size:11.19px;line-height:11.19px;color:#d6ddf2;transform:scaleX(0.8194);transform-origin:0 0;font-family:'Liberation Sans', sans-serif;">600</div><div class="t" style="left:673.27px;top:549.52px;font-size:11.19px;line-height:11.19px;color:#d6ddf2;transform:scaleX(0.8194);transform-origin:0 0;font-family:'Liberation Sans', sans-serif;">800</div><div class="t" style="left:818.15px;top:549.52px;font-size:11.19px;line-height:11.19px;color:#d6ddf2;transform:scaleX(0.8194);transform-origin:0 0;font-family:'Liberation Sans', sans-serif;">1000</div><div class="t" style="left:965.58px;top:549.52px;font-size:11.19px;line-height:11.19px;color:#d6ddf2;transform:scaleX(0.8194);transform-origin:0 0;font-family:'Liberation Sans', sans-serif;">1200</div><div class="t" style="left:1113.01px;top:549.52px;font-size:11.19px;line-height:11.19px;color:#d6ddf2;transform:scaleX(0.8194);transform-origin:0 0;font-family:'Liberation Sans', sans-serif;">1400</div><div class="t" style="left:1260.44px;top:549.52px;font-size:11.19px;line-height:11.19px;color:#d6ddf2;transform:scaleX(0.8194);transform-origin:0 0;font-family:'Liberation Sans', sans-serif;">1600</div><div class="t" style="left:1407.87px;top:549.52px;font-size:11.19px;line-height:11.19px;color:#d6ddf2;transform:scaleX(0.8194);transform-origin:0 0;font-family:'Liberation Sans', sans-serif;">1800</div><div class="t" style="left:1555.30px;top:549.52px;font-size:11.19px;line-height:11.19px;color:#d6ddf2;transform:scaleX(0.8194);transform-origin:0 0;font-family:'Liberation Sans', sans-serif;">2000</div><div class="t" style="left:790.00px;top:568.52px;font-size:11.19px;line-height:11.19px;color:#d6ddf2;transform:scaleX(0.8336);transform-origin:0 0;font-family:'Liberation Sans', sans-serif;">Energy (KeV)</div><div class="t" style="left:6.5px;top:381.5px;width:31px;height:11px;font-size:11.19px;line-height:11px;color:#d6ddf2;text-align:center;transform:rotate(-90deg) scaleX(0.89);transform-origin:15.5px 5.5px;font-family:'Liberation Sans',sans-serif">Counts</div>
</body></html>
